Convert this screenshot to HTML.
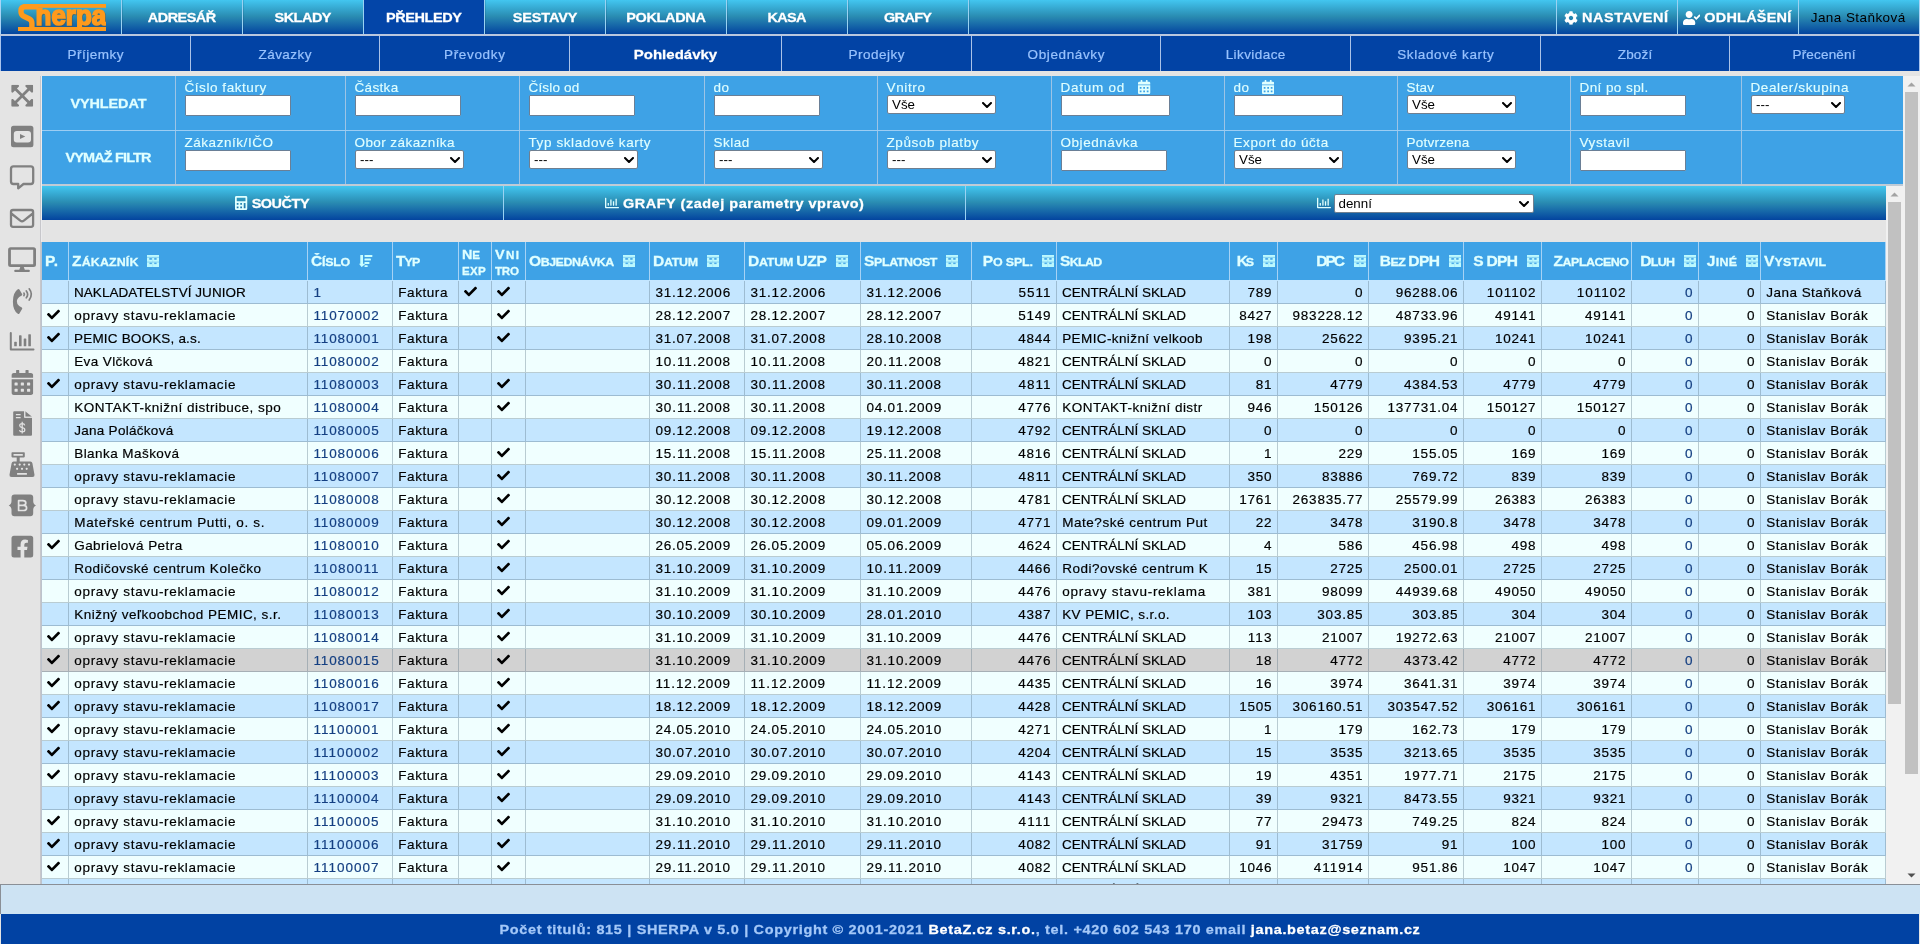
<!DOCTYPE html>
<html lang="cs"><head><meta charset="utf-8"><title>Sherpa - Pohledávky</title>
<style>
*{box-sizing:border-box}
html,body{margin:0;padding:0}
body{width:1920px;height:944px;overflow:hidden;position:relative;background:#e4e4e4;font-family:"Liberation Sans",sans-serif;font-size:13.5px;color:#000}
svg{display:block}
/* ---------- top nav ---------- */
#nav{position:absolute;left:0;top:0;width:1920px;height:34px;display:flex;background:linear-gradient(180deg,#42c6f0 0%,#2a8cb2 48%,#03449f 100%);border-left:1px solid #a9d3f6;border-right:1px solid #a9d3f6}
#gap{position:absolute;left:0;top:34px;width:1920px;height:2px;background:#bac7de}
.ni{width:121px;height:34px;border-right:1px solid #9ad2f2;box-shadow:1px 0 0 rgba(0,30,60,.13);display:flex;align-items:center;justify-content:center;color:#fff;font-weight:bold;font-size:13px;white-space:nowrap;padding-top:1px}
.ni.act{background:#0345a8}
.nr{margin-left:auto;display:flex}
.ni.r{border-right:none;border-left:1px solid #9ad2f2;box-shadow:none}
.ni .ic{fill:#fff;margin-right:4px}
.ni.usr{color:#000;font-weight:normal;font-size:13.5px}
.lg{font-family:"Liberation Sans",sans-serif;font-weight:bold;color:#ff9a1a}
/* ---------- sub nav ---------- */
#sub{position:absolute;left:0;top:36px;width:1920px;height:35px;display:flex;background:#0243a5;border-left:1px solid #a9c4ee;border-right:1px solid #a9c4ee}
.si2{height:35px;padding-top:2px;margin-right:1px;box-shadow:1px 0 0 #aac2e8;display:flex;align-items:center;justify-content:center;color:#98c2fd;font-size:13.5px;white-space:nowrap;-webkit-text-stroke:.22px currentColor}
.si2.last{box-shadow:none;margin-right:0}
.si2.act{color:#fff;font-weight:bold}
/* ---------- sidebar ---------- */
#side{position:absolute;left:0;top:76px;width:41px;height:808px}
#side:before{content:"";position:absolute;left:40px;top:0;width:2px;height:808px;background:linear-gradient(90deg,#c7c7cb 1px,transparent 1px),linear-gradient(180deg,#ebebed 166px,#bcc3cd 166px)}
#side svg{position:absolute;fill:#808080}
/* ---------- filter ---------- */
#flt{position:absolute;left:42px;top:76px;width:1861px;height:110px;background:#3ea2e6;border-bottom:2px solid #bfcbd6}
.fr{display:flex;height:55px}
.fr0{border-bottom:1px solid #9ccdf3}
.fr1{height:53px}
.fc{height:100%;margin-right:1px;box-shadow:1px 0 0 #9cc4e6;padding:4px 0 0 9px;color:#e0ffff;white-space:nowrap;position:relative}
.fc.last{box-shadow:none;margin-right:0}
.fc.btn{padding:0;display:flex;align-items:center;justify-content:center;font-weight:bold}
.lab{height:15px;line-height:15px;display:flex;align-items:center;margin-left:-.5px}
.cal{width:12.25px;height:14px;fill:#e0ffff;display:inline-block;margin-top:-2px}
.inp{height:21px;background:#fff;border:1px solid #6a7f96;border-radius:1px;margin-top:0px}
.sel{height:19px;background:#fff;border:1px solid #6f7f90;border-radius:2px;position:relative;color:#000;font-size:13.33px;line-height:17px;padding-left:4px}
.chev{position:absolute;right:3.500px;top:5.500px;width:10px;height:6px}
/* ---------- action bar ---------- */
#act{position:absolute;left:42px;top:186px;width:1844px;height:34px;display:flex;background:linear-gradient(180deg,#42c6f0 0%,#2a8cb2 48%,#03449f 100%)}
.ac{height:34px;margin-right:1px;box-shadow:1px 0 0 #9ad2f2;display:flex;align-items:center;justify-content:center;color:#fff;font-weight:bold;white-space:nowrap}
.ac.last{box-shadow:none;margin-right:0}
.ac .ic{fill:#e0ffff;margin-right:4px}
.sel.big{height:19px;margin-top:1px;margin-left:-1px;line-height:17px;font-weight:normal;margin-left:-1px;-webkit-text-stroke:0;font-size:13.33px}
/* ---------- table ---------- */
#tbl{position:absolute;left:42px;top:242px;width:1844px;height:642px;overflow:hidden}
.thr{display:flex;height:39px;background:#3ea2e6;border-bottom:1px solid #c4e6ff}
.th{height:38px;margin-right:1px;box-shadow:1px 0 0 #a6d2f5;display:flex;align-items:center;padding:0 2px 0 3px;color:#e0ffff;font-weight:bold;white-space:nowrap}
.th.r{justify-content:flex-end}
.sc{font-size:12.44px;font-weight:bold;position:relative;top:1px;display:inline-block;transform:scaleY(.9)}
.sc b{font-size:15.56px}
.two{line-height:16px;display:block}
.gi{width:12px;height:12px;margin-left:9px;flex:none;margin-top:0px}
.si{width:13.4px;height:12.1px;fill:#c8ffff;margin-left:9px;flex:none}
.tr{display:flex;height:23px;border-bottom:1px solid rgba(90,115,130,.36)}
.tr.o{background:#c4e6ff}
.tr.e{background:#f0ffff}
.tr.hov{background:#d2d2d2}
.td{height:22px;margin-right:1px;box-shadow:1px 0 0 rgba(90,115,130,.36);line-height:24px;padding:0 5px 0 5px;white-space:nowrap;overflow:hidden}
.td.r{text-align:right}
.td a{color:#143f82}
.ck{width:13px;height:13px;fill:#000;margin:4px 0 0 0}
.c-ne .ck,.c-vn .ck{margin-left:0}
/* ---------- scrollbars ---------- */
.sb{position:absolute;width:17px;background:#f1f1f1;overflow:hidden}
.sb .up,.sb .dn{position:absolute;left:0;width:17px;height:17px}
.sb .up{top:0}.sb .dn{bottom:0}
.arr{width:17px;height:17px;fill:#505050}
.dis .arr{fill:#a3a3a3}
.thumb{position:absolute;left:2px;width:13px;background:#c1c1c1}
/* ---------- footer ---------- */
#fbar{position:absolute;left:0;top:884px;width:1920px;height:30px;background:#cde3f3;border-top:1px solid #8a8f96;border-left:1px solid #8a8f96}
#foot{position:absolute;left:1px;top:914px;width:1918px;height:30px;background:#0142a3;color:#a4c8f8;font-weight:bold;font-size:13px;display:flex;align-items:center;justify-content:center;white-space:nowrap;padding-top:1px}
#foot b{color:#fff}
.lab i{display:inline-block;height:1px}
.ni.logo{justify-content:flex-start;align-items:flex-start;padding:0}
.lgo{margin:3.800px 0 0 16.600px}

#nav,#sub,#flt,#act,#tbl,#foot,#fbar,#side{will-change:transform}
.ni,.ac,.fc.btn,#foot{-webkit-text-stroke:.3px currentColor}
.ni.usr{-webkit-text-stroke:0}
.sc{-webkit-text-stroke:.3px currentColor}
.si2.act{-webkit-text-stroke:.3px currentColor}
.c-ne .sc,.c-vn .sc{font-size:11.6px}
.c-ne .sc b,.c-vn .sc b{font-size:14.4px}

.ac,.fc.btn{font-size:13px}
.ni.r{padding-right:2px}

.sel.big .chev{top:5px}

.td{-webkit-text-stroke:.18px currentColor}
.ac>span{position:relative;top:1px}
.fr0 .fc.btn{padding-top:1px}

.lab{-webkit-text-stroke:.15px currentColor}

.ac.last{padding-right:2px}
.sel.big .chev{top:5.5px}

</style></head>
<body>
<div id="nav"><div class="ni logo"><svg class="lgo" viewBox="0 0 88.400 27.400" width="88.400" height="27.400"><defs><clipPath id="lc"><rect x="0" y="3.800" width="89" height="19.300"/></clipPath></defs><g clip-path="url(#lc)" fill="#5c5140" opacity=".55"><text x="18.300" y="21.700" font-family="Liberation Sans" font-weight="bold" font-size="28.500" textLength="70.600" lengthAdjust="spacingAndGlyphs" stroke="#5c5140" stroke-width="1.700">nerpa</text></g><g fill="#ff9a1c"><rect x="5" y="0" width="83.400" height="3.800"/><rect x="0" y="23" width="88.400" height="4.400"/><path fill="none" stroke="#ff9a1c" stroke-width="5.400" stroke-linejoin="round" d="M20 2.700H7Q3 2.700 3 6.600V8Q3 11 6.200 12.500L11 14.800Q13.900 16.200 13.900 19.200V25"/><g clip-path="url(#lc)"><text x="17.600" y="21" font-family="Liberation Sans" font-weight="bold" font-size="28.500" textLength="70.600" lengthAdjust="spacingAndGlyphs" stroke="#ff9a1c" stroke-width="1.700" style="paint-order:stroke">nerpa</text><rect x="19.200" y="4" width="5.400" height="6"/></g></g></svg></div><div class="ni"><span style="display:inline-block;transform:translateY(-0.600px) scaleY(0.9);font-size:14.44px;letter-spacing:-0.52px;margin-right:0.52px">ADRESÁŘ</span></div><div class="ni"><span style="display:inline-block;transform:translateY(-0.600px) scaleY(0.9);font-size:14.44px;letter-spacing:-0.48px;margin-right:0.48px">SKLADY</span></div><div class="ni act"><span style="display:inline-block;transform:translateY(-0.600px) scaleY(0.9);font-size:14.44px;letter-spacing:-0.38px;margin-right:0.38px">PŘEHLEDY</span></div><div class="ni"><span style="display:inline-block;transform:translateY(-0.600px) scaleY(0.9);font-size:14.44px;letter-spacing:-0.09px;margin-right:0.09px">SESTAVY</span></div><div class="ni"><span style="display:inline-block;transform:translateY(-0.600px) scaleY(0.9);font-size:14.44px;letter-spacing:-0.3px;margin-right:0.3px">POKLADNA</span></div><div class="ni"><span style="display:inline-block;transform:translateY(-0.600px) scaleY(0.9);font-size:14.44px;letter-spacing:-0.66px;margin-right:0.66px">KASA</span></div><div class="ni"><span style="display:inline-block;transform:translateY(-0.600px) scaleY(0.9);font-size:14.44px;letter-spacing:-0.65px;margin-right:0.65px">GRAFY</span></div><div class="nr"><div class="ni r"><svg class="ic" viewBox="0 0 512 512" style="width:14px;height:14px"><path d="M487.4 315.7l-42.6-24.6c4.3-23.2 4.3-47 0-70.2l42.6-24.6c4.9-2.8 7.1-8.6 5.5-14-11.1-35.6-30-67.8-54.7-94.600-3.8-4.100-10-5.100-14.800-2.300L380.800 110c-17.900-15.400-38.500-27.300-60.800-35.100V25.800c0-5.600-3.900-10.500-9.400-11.700-36.700-8.200-74.300-7.800-109.200 0-5.500 1.200-9.400 6.100-9.400 11.700V75c-22.200 7.900-42.800 19.800-60.800 35.100L88.700 85.500c-4.900-2.800-11-1.900-14.800 2.300-24.700 26.700-43.600 58.900-54.700 94.600-1.700 5.400.6 11.200 5.500 14L67.300 221c-4.300 23.200-4.300 47 0 70.200l-42.600 24.600c-4.900 2.800-7.100 8.600-5.500 14 11.100 35.600 30 67.800 54.700 94.600 3.800 4.100 10 5.100 14.800 2.300l42.600-24.600c17.900 15.400 38.500 27.300 60.800 35.100v49.200c0 5.600 3.900 10.500 9.400 11.700 36.700 8.200 74.300 7.800 109.200 0 5.500-1.200 9.400-6.100 9.400-11.700v-49.200c22.200-7.900 42.800-19.800 60.800-35.100l42.600 24.600c4.900 2.800 11 1.900 14.800-2.300 24.700-26.700 43.600-58.900 54.700-94.600 1.500-5.500-.7-11.300-5.600-14.100zM256 336c-44.100 0-80-35.900-80-80s35.900-80 80-80 80 35.900 80 80-35.900 80-80 80z"/></svg><span style="display:inline-block;transform:translateY(-0.600px) scaleY(0.9);font-size:14.44px;letter-spacing:0.61px;margin-right:-0.61px">NASTAVENÍ</span></div><div class="ni r"><svg class="ic" viewBox="0 0 640 512" style="width:17.5px;height:14px"><path d="M224 256c70.700 0 128-57.300 128-128S294.700 0 224 0 96 57.300 96 128s57.300 128 128 128zm89.600 32h-16.700c-22.200 10.200-46.900 16-72.900 16s-50.600-5.800-72.900-16h-16.700C60.200 288 0 348.200 0 422.400V464c0 26.500 21.500 48 48 48h352c26.500 0 48-21.500 48-48v-41.600c0-74.200-60.200-134.400-134.400-134.400zm323-128.400l-27.800-28.100c-4.600-4.700-12.100-4.700-16.800-.1l-104.800 104-45.500-45.800c-4.600-4.700-12.100-4.700-16.800-.1l-28.100 27.900c-4.700 4.600-4.700 12.100-.1 16.800l81.700 82.300c4.600 4.700 12.100 4.700 16.800.1l141.300-140.200c4.600-4.700 4.700-12.200.1-16.800z"/></svg><span style="display:inline-block;transform:translateY(-0.600px) scaleY(0.9);font-size:14.44px;letter-spacing:0.24px;margin-right:-0.24px">ODHLÁŠENÍ</span></div><div class="ni r usr"><span style="letter-spacing:0.43px;margin-right:-0.43px">Jana Staňková</span></div></div></div>
<div id="gap"></div>
<div id="sub"><div class="si2" style="width:189px"><span style="letter-spacing:0.53px;margin-right:-0.53px">Příjemky</span></div><div class="si2" style="width:188px"><span style="letter-spacing:0.46px;margin-right:-0.46px">Závazky</span></div><div class="si2" style="width:189px"><span style="letter-spacing:0.67px;margin-right:-0.67px">Převodky</span></div><div class="si2 act" style="width:211px"><span style="display:inline-block;transform:translateY(-0.600px) scaleY(0.9);font-size:15.0px;letter-spacing:0.01px;margin-right:-0.01px">Pohledávky</span></div><div class="si2" style="width:189px"><span style="letter-spacing:0.5px;margin-right:-0.5px">Prodejky</span></div><div class="si2" style="width:188px"><span style="letter-spacing:0.63px;margin-right:-0.63px">Objednávky</span></div><div class="si2" style="width:189px"><span style="letter-spacing:0.43px;margin-right:-0.43px">Likvidace</span></div><div class="si2" style="width:189px"><span style="letter-spacing:0.63px;margin-right:-0.63px">Skladové karty</span></div><div class="si2" style="width:188px"><span style="letter-spacing:0.18px;margin-right:-0.18px">Zboží</span></div><div class="si2 last" style="width:188px"><span style="letter-spacing:0.18px;margin-right:-0.18px">Přecenění</span></div></div>
<div id="side"><svg viewBox="0 76 41 500" style="left:0;top:0;width:41px;height:500px" fill="#808080" stroke="none">
<!-- 1 expand arrows -->
<svg x="11.200" y="84.800" width="22" height="22" viewBox="0 32 448 448"><path d="M448 344v112a23.940 23.940 0 0 1-24 24H312c-21.390 0-32.090-25.900-17-41l36.200-36.200L224 295.600 116.770 402.900 153 439c15.090 15.100 4.390 41-17 41H24a23.940 23.940 0 0 1-24-24V344c0-21.400 25.890-32.100 41-17l36.190 36.200L184.460 256 77.180 148.700 41 185c-15.100 15.100-41 4.400-41-17V56a23.940 23.940 0 0 1 24-24h112c21.390 0 32.090 25.900 17 41l-36.200 36.200L224 216.400l107.230-107.300L295 73c-15.090-15.100-4.390-41 17-41h112a23.940 23.940 0 0 1 24 24v112c0 21.400-25.890 32.100-41 17l-36.190-36.200L263.540 256l107.280 107.300L407 327.100c15.100-15.200 41-4.500 41 16.900z"/></svg>
<!-- 2 youtube square -->
<path fill-rule="evenodd" d="M13.500 125.800h17.400a2.500 2.500 0 0 1 2.500 2.500v16.400a2.500 2.500 0 0 1-2.500 2.500H13.500a2.500 2.500 0 0 1-2.500-2.500v-16.400a2.500 2.500 0 0 1 2.500-2.500zM16.800 131q-3 0-3 3v5.400q0 3 3 3h11.200q3 0 3-3V134q0-3-3-3zM20 133.900v5.200l5.300-2.600z"/>
<!-- 3 comment-alt regular -->
<path fill="none" stroke="#808080" stroke-width="2.300" stroke-linejoin="round" d="M13.500 166.400h17.200a2.500 2.500 0 0 1 2.500 2.500v12.600a2.500 2.500 0 0 1-2.500 2.500h-7.200l-5.300 4.300v-4.300h-4.700a2.500 2.500 0 0 1-2.500-2.500v-12.600a2.500 2.500 0 0 1 2.500-2.500z"/>
<!-- 4 envelope regular -->
<path fill="none" stroke="#808080" stroke-width="2.300" stroke-linejoin="round" d="M13 210h18.100a2 2 0 0 1 2 2v12.800a2 2 0 0 1-2 2H13a2 2 0 0 1-2-2V212a2 2 0 0 1 2-2zM11.300 213.500l9 7.200q1.750 1.300 3.500 0l9-7.200"/>
<!-- 5 desktop -->
<path fill-rule="evenodd" d="M10.600 247.200h22.900a2.500 2.500 0 0 1 2.500 2.500v14.900a2.500 2.500 0 0 1-2.500 2.500H10.600a2.500 2.500 0 0 1-2.500-2.500v-14.900a2.500 2.500 0 0 1 2.500-2.500zM10.900 249.800v14.400h22.300v-14.400zM20.300 267.100h3.500l1 2.700h4a1.100 1.100 0 0 1 0 2.200H15.300a1.100 1.100 0 0 1 0-2.200h4z"/>
<!-- 6 phone volume -->
<path d="M19.4 289.6l2.7 4.4q.5.9-.3 1.500l-2.600 1.600q-5 4.400 0 8.800l2.600 1.600q.8.600.3 1.500l-2.700 4.400q-.6.9-1.600.4q-4.900-3.400-4.900-12.300q0-8.900 4.900-12.300q1-.5 1.600.4z"/>
<path fill="none" stroke="#808080" stroke-width="1.700" stroke-linecap="round" d="M23.900 293.100q1 1.300 0 2.600M26.300 291q2.700 3.400 0 6.800M29.200 288.800q4.300 5.600 0 11.200"/>
<!-- 7 chart-bar regular -->
<path d="M10.800 332a1 1 0 0 1 1 1v15.600h21.700a1 1 0 0 1 0 2H10.800a1 1 0 0 1-1-1V333a1 1 0 0 1 1-1z"/>
<rect x="14.200" y="341.800" width="2.600" height="4.500" rx=".6"/><rect x="19" y="335.300" width="2.600" height="11" rx=".6"/><rect x="23.700" y="338.400" width="2.600" height="7.900" rx=".6"/><rect x="28.300" y="334.200" width="2.600" height="12.100" rx=".6"/>
<!-- 8 calendar-alt -->
<svg x="11.400" y="369.900" width="21.900" height="25" viewBox="0 0 448 512"><path d="M0 464c0 26.500 21.500 48 48 48h352c26.500 0 48-21.500 48-48V192H0v272zm320-196c0-6.600 5.400-12 12-12h40c6.600 0 12 5.400 12 12v40c0 6.600-5.400 12-12 12h-40c-6.600 0-12-5.400-12-12v-40zm0 128c0-6.600 5.400-12 12-12h40c6.600 0 12 5.400 12 12v40c0 6.600-5.400 12-12 12h-40c-6.600 0-12-5.400-12-12v-40zM192 268c0-6.600 5.400-12 12-12h40c6.600 0 12 5.400 12 12v40c0 6.600-5.400 12-12 12h-40c-6.600 0-12-5.400-12-12v-40zm0 128c0-6.600 5.400-12 12-12h40c6.600 0 12 5.400 12 12v40c0 6.600-5.400 12-12 12h-40c-6.600 0-12-5.400-12-12v-40zM64 268c0-6.600 5.400-12 12-12h40c6.600 0 12 5.400 12 12v40c0 6.600-5.400 12-12 12H76c-6.600 0-12-5.400-12-12v-40zm0 128c0-6.600 5.400-12 12-12h40c6.600 0 12 5.400 12 12v40c0 6.600-5.400 12-12 12H76c-6.600 0-12-5.400-12-12v-40zM400 64h-48V16c0-8.800-7.200-16-16-16h-32c-8.800 0-16 7.200-16 16v48H160V16c0-8.800-7.200-16-16-16h-32c-8.800 0-16 7.200-16 16v48H48C21.500 64 0 85.500 0 112v48h448v-48c0-26.500-21.500-48-48-48z"/></svg>
<!-- 9 file-invoice-dollar -->
<path fill-rule="evenodd" d="M14.200 411.200h10v6.500h7.800v17.100a1 1 0 0 1-1 1H14.200a1 1 0 0 1-1-1v-22.600a1 1 0 0 1 1-1zM15.900 413.900v1.400h4.700v-1.400zM15.900 416.900v1.400h4.700v-1.400z"/>
<path d="M25.300 411.200l6.700 5.500h-6.700z"/>
<path fill="none" stroke="#e4e4e4" stroke-width="1.200" d="M22.200 421.800v11.800M24.700 425.300q-.3-1.600-2.500-1.600q-2.500 0-2.500 1.900q0 1.600 2.500 2.100q2.600.5 2.600 2.200q0 1.900-2.600 1.900q-2.400 0-2.700-1.700"/>
<path fill="none" stroke="#e4e4e4" stroke-width=".9" d="M24.700 411.200v6h7.300"/>
<!-- 10 cash register -->
<path fill-rule="evenodd" d="M12.300 452.300h11.700a.8.800 0 0 1 .8.800v3.500a.8.800 0 0 1-.8.800h-4.300v4.200h10.700q1.600 0 2 1.600l2.100 11.500q.3 2.200-2 2.200H11.500q-2.300 0-2-2.200l2.100-11.500q.4-1.600 2-1.600h3.100v-4.200h-4.400a.8.800 0 0 1-.8-.8v-3.500a.8.800 0 0 1 .8-.8zM13.500 454v1.700h9.300V454zM17.100 473v1.800h9.800V473z"/>
<g fill="#e4e4e4"><circle cx="14.800" cy="464.600" r="1.100"/><circle cx="19.700" cy="464.600" r="1.100"/><circle cx="24.300" cy="464.600" r="1.100"/><circle cx="29" cy="464.600" r="1.100"/><circle cx="17.100" cy="468.800" r="1.100"/><circle cx="22" cy="468.800" r="1.100"/><circle cx="26.700" cy="468.800" r="1.100"/></g>
<!-- 11 bootstrap -->
<path d="M14.500 494.500h15.700q3 0 3 3v3.500q0 3.300 2.800 4.400q-2.800 1.100-2.800 4.400v3.500q0 3-3 3H14.500q-3 0-3-3v-3.500q0-3.300-2.800-4.400q2.800-1.100 2.800-4.400v-3.500q0-3 3-3z"/>
<path fill="none" stroke="#e4e4e4" stroke-width="1.700" stroke-linejoin="round" d="M18.600 500.700h4.300q2.900 0 2.900 2.400q0 2.300-2.900 2.300h-4.300zM18.600 505.400h4.900q3.100 0 3.100 2.600q0 2.500-3.100 2.500h-4.900zM18.600 500.700v9.800"/>
<!-- 12 facebook square -->
<path fill-rule="evenodd" d="M14 535.800h16.700a2.500 2.500 0 0 1 2.500 2.500v16.800a2.500 2.500 0 0 1-2.500 2.500h-6.400v-7.500h2.700l.5-3.300h-3.200v-2.100q0-2 2.100-2h1.500v-2.800q-1.500-.3-2.800-.3q-4.500 0-4.500 4.700v2.500h-3.100v3.300h3.100v7.500H14a2.500 2.500 0 0 1-2.500-2.500v-16.800a2.500 2.500 0 0 1 2.500-2.500z"/>
</svg>
</div>
<div id="flt"><div class="fr fr0"><div class="fc btn" style="width:133px"><span style="display:inline-block;transform:translateY(-0.600px) scaleY(0.9);font-size:14.44px;letter-spacing:-0.11px;margin-right:0.11px">VYHLEDAT</span></div><div class="fc" style="width:169px"><div class="lab"><span style="letter-spacing:0.56px;margin-right:-0.56px">Číslo faktury</span></div><div class="inp" style="width:106px"></div></div><div class="fc" style="width:173px"><div class="lab"><span style="letter-spacing:0.34px;margin-right:-0.34px">Částka</span></div><div class="inp" style="width:106px"></div></div><div class="fc" style="width:184px"><div class="lab"><span style="letter-spacing:0.17px;margin-right:-0.17px">Číslo od</span></div><div class="inp" style="width:106px"></div></div><div class="fc" style="width:172px"><div class="lab"><span style="letter-spacing:0.47px;margin-right:-0.47px">do</span></div><div class="inp" style="width:106px"></div></div><div class="fc" style="width:173px"><div class="lab"><span style="letter-spacing:0.64px;margin-right:-0.64px">Vnitro</span></div><div class="sel" style="width:109px"><span>Vše</span><svg class="chev" viewBox="0 0 10 6"><path d="M1 1l4 4 4-4" fill="none" stroke="#000" stroke-width="2" stroke-linecap="round" stroke-linejoin="round"/></svg></div></div><div class="fc" style="width:172px"><div class="lab"><span style="letter-spacing:0.75px;margin-right:-0.75px">Datum od</span><i style="width:14px"></i><svg class="cal" viewBox="0 0 448 512"><path d="M0 464c0 26.500 21.500 48 48 48h352c26.500 0 48-21.500 48-48V192H0v272zm320-196c0-6.600 5.400-12 12-12h40c6.600 0 12 5.400 12 12v40c0 6.600-5.400 12-12 12h-40c-6.600 0-12-5.400-12-12v-40zm0 128c0-6.600 5.400-12 12-12h40c6.600 0 12 5.400 12 12v40c0 6.600-5.400 12-12 12h-40c-6.600 0-12-5.400-12-12v-40zM192 268c0-6.600 5.400-12 12-12h40c6.600 0 12 5.400 12 12v40c0 6.600-5.400 12-12 12h-40c-6.600 0-12-5.400-12-12v-40zm0 128c0-6.600 5.400-12 12-12h40c6.600 0 12 5.400 12 12v40c0 6.600-5.400 12-12 12h-40c-6.600 0-12-5.400-12-12v-40zM64 268c0-6.600 5.400-12 12-12h40c6.600 0 12 5.400 12 12v40c0 6.600-5.400 12-12 12H76c-6.600 0-12-5.400-12-12v-40zm0 128c0-6.600 5.400-12 12-12h40c6.600 0 12 5.400 12 12v40c0 6.600-5.400 12-12 12H76c-6.600 0-12-5.400-12-12v-40zM400 64h-48V16c0-8.800-7.200-16-16-16h-32c-8.800 0-16 7.200-16 16v48H160V16c0-8.800-7.200-16-16-16h-32c-8.800 0-16 7.200-16 16v48H48C21.500 64 0 85.500 0 112v48h448v-48c0-26.500-21.500-48-48-48z"/></svg></div><div class="inp" style="width:109px"></div></div><div class="fc" style="width:172px"><div class="lab"><span style="letter-spacing:0.47px;margin-right:-0.47px">do</span><i style="width:13px"></i><svg class="cal" viewBox="0 0 448 512"><path d="M0 464c0 26.500 21.500 48 48 48h352c26.500 0 48-21.500 48-48V192H0v272zm320-196c0-6.600 5.400-12 12-12h40c6.600 0 12 5.400 12 12v40c0 6.600-5.400 12-12 12h-40c-6.600 0-12-5.400-12-12v-40zm0 128c0-6.600 5.400-12 12-12h40c6.600 0 12 5.400 12 12v40c0 6.600-5.400 12-12 12h-40c-6.600 0-12-5.400-12-12v-40zM192 268c0-6.600 5.400-12 12-12h40c6.600 0 12 5.400 12 12v40c0 6.600-5.400 12-12 12h-40c-6.600 0-12-5.400-12-12v-40zm0 128c0-6.600 5.400-12 12-12h40c6.600 0 12 5.400 12 12v40c0 6.600-5.400 12-12 12h-40c-6.600 0-12-5.400-12-12v-40zM64 268c0-6.600 5.400-12 12-12h40c6.600 0 12 5.400 12 12v40c0 6.600-5.400 12-12 12H76c-6.600 0-12-5.400-12-12v-40zm0 128c0-6.600 5.400-12 12-12h40c6.600 0 12 5.400 12 12v40c0 6.600-5.400 12-12 12H76c-6.600 0-12-5.400-12-12v-40zM400 64h-48V16c0-8.800-7.200-16-16-16h-32c-8.800 0-16 7.200-16 16v48H160V16c0-8.800-7.200-16-16-16h-32c-8.800 0-16 7.200-16 16v48H48C21.500 64 0 85.500 0 112v48h448v-48c0-26.500-21.500-48-48-48z"/></svg></div><div class="inp" style="width:109px"></div></div><div class="fc" style="width:172px"><div class="lab"><span style="letter-spacing:0.16px;margin-right:-0.16px">Stav</span></div><div class="sel" style="width:109px"><span>Vše</span><svg class="chev" viewBox="0 0 10 6"><path d="M1 1l4 4 4-4" fill="none" stroke="#000" stroke-width="2" stroke-linecap="round" stroke-linejoin="round"/></svg></div></div><div class="fc" style="width:170px"><div class="lab"><span style="letter-spacing:0.42px;margin-right:-0.42px">Dní po spl.</span></div><div class="inp" style="width:106px"></div></div><div class="fc last" style="width:160px"><div class="lab"><span style="letter-spacing:0.61px;margin-right:-0.61px">Dealer/skupina</span></div><div class="sel" style="width:94px"><span>---</span><svg class="chev" viewBox="0 0 10 6"><path d="M1 1l4 4 4-4" fill="none" stroke="#000" stroke-width="2" stroke-linecap="round" stroke-linejoin="round"/></svg></div></div></div><div class="fr fr1"><div class="fc btn" style="width:133px"><span style="display:inline-block;transform:translateY(-0.600px) scaleY(0.9);font-size:14.44px;letter-spacing:-0.84px;margin-right:0.84px">VYMAŽ FILTR</span></div><div class="fc" style="width:169px"><div class="lab"><span style="letter-spacing:0.54px;margin-right:-0.54px">Zákazník/IČO</span></div><div class="inp" style="width:106px"></div></div><div class="fc" style="width:173px"><div class="lab"><span style="letter-spacing:0.42px;margin-right:-0.42px">Obor zákazníka</span></div><div class="sel" style="width:109px"><span>---</span><svg class="chev" viewBox="0 0 10 6"><path d="M1 1l4 4 4-4" fill="none" stroke="#000" stroke-width="2" stroke-linecap="round" stroke-linejoin="round"/></svg></div></div><div class="fc" style="width:184px"><div class="lab"><span style="letter-spacing:0.6px;margin-right:-0.6px">Typ skladové karty</span></div><div class="sel" style="width:109px"><span>---</span><svg class="chev" viewBox="0 0 10 6"><path d="M1 1l4 4 4-4" fill="none" stroke="#000" stroke-width="2" stroke-linecap="round" stroke-linejoin="round"/></svg></div></div><div class="fc" style="width:172px"><div class="lab"><span style="letter-spacing:0.49px;margin-right:-0.49px">Sklad</span></div><div class="sel" style="width:109px"><span>---</span><svg class="chev" viewBox="0 0 10 6"><path d="M1 1l4 4 4-4" fill="none" stroke="#000" stroke-width="2" stroke-linecap="round" stroke-linejoin="round"/></svg></div></div><div class="fc" style="width:173px"><div class="lab"><span style="letter-spacing:0.6px;margin-right:-0.6px">Způsob platby</span></div><div class="sel" style="width:109px"><span>---</span><svg class="chev" viewBox="0 0 10 6"><path d="M1 1l4 4 4-4" fill="none" stroke="#000" stroke-width="2" stroke-linecap="round" stroke-linejoin="round"/></svg></div></div><div class="fc" style="width:172px"><div class="lab"><span style="letter-spacing:0.55px;margin-right:-0.55px">Objednávka</span></div><div class="inp" style="width:106px"></div></div><div class="fc" style="width:172px"><div class="lab"><span style="letter-spacing:0.59px;margin-right:-0.59px">Export do účta</span></div><div class="sel" style="width:109px"><span>Vše</span><svg class="chev" viewBox="0 0 10 6"><path d="M1 1l4 4 4-4" fill="none" stroke="#000" stroke-width="2" stroke-linecap="round" stroke-linejoin="round"/></svg></div></div><div class="fc" style="width:172px"><div class="lab"><span style="letter-spacing:0.24px;margin-right:-0.24px">Potvrzena</span></div><div class="sel" style="width:109px"><span>Vše</span><svg class="chev" viewBox="0 0 10 6"><path d="M1 1l4 4 4-4" fill="none" stroke="#000" stroke-width="2" stroke-linecap="round" stroke-linejoin="round"/></svg></div></div><div class="fc" style="width:170px"><div class="lab"><span style="letter-spacing:0.57px;margin-right:-0.57px">Vystavil</span></div><div class="inp" style="width:106px"></div></div><div class="fc last" style="width:160px"><div class="lab"></div></div></div></div>
<div id="act"><div class="ac" style="width:461px"><svg class="ic" viewBox="0 0 448 512" style="width:12.25px;height:14px"><path d="M400 0H48C22.400 0 0 22.400 0 48v416c0 25.600 22.400 48 48 48h352c25.600 0 48-22.400 48-48V48c0-25.600-22.400-48-48-48zM128 435.200c0 6.400-6.400 12.800-12.800 12.800H76.800c-6.400 0-12.800-6.400-12.800-12.800v-38.400c0-6.400 6.400-12.800 12.800-12.800h38.400c6.400 0 12.800 6.400 12.800 12.800v38.400zm0-128c0 6.400-6.400 12.800-12.800 12.800H76.800c-6.400 0-12.800-6.400-12.800-12.800v-38.400c0-6.400 6.400-12.800 12.800-12.800h38.400c6.400 0 12.800 6.400 12.800 12.800v38.400zm128 128c0 6.400-6.400 12.800-12.800 12.800h-38.400c-6.400 0-12.800-6.400-12.800-12.800v-38.400c0-6.400 6.400-12.800 12.800-12.800h38.400c6.400 0 12.800 6.400 12.800 12.800v38.400zm0-128c0 6.400-6.400 12.800-12.800 12.800h-38.400c-6.400 0-12.800-6.400-12.800-12.800v-38.400c0-6.400 6.400-12.800 12.800-12.800h38.400c6.400 0 12.800 6.400 12.800 12.800v38.400zm128 128c0 6.400-6.400 12.800-12.800 12.800h-38.400c-6.400 0-12.800-6.400-12.800-12.800V268.800c0-6.400 6.400-12.800 12.800-12.800h38.400c6.400 0 12.800 6.400 12.800 12.800v166.400zm0-256c0 6.400-6.400 12.800-12.800 12.800H76.800c-6.400 0-12.800-6.400-12.800-12.800V76.800C64 70.400 70.400 64 76.800 64h294.400c6.400 0 12.800 6.400 12.800 12.800v102.400z"/></svg><span style="display:inline-block;transform:translateY(-0.600px) scaleY(0.9);font-size:14.44px;letter-spacing:-0.44px;margin-right:0.44px">SOUČTY</span></div><div class="ac" style="width:461px"><svg class="ic" viewBox="0 0 512 512" style="width:14px;height:14px"><path d="M396.800 352h22.400c6.400 0 12.800-6.400 12.800-12.800V108.800c0-6.400-6.400-12.800-12.800-12.800h-22.400c-6.400 0-12.800 6.400-12.800 12.800v230.400c0 6.400 6.400 12.800 12.800 12.800zm-192 0h22.400c6.400 0 12.800-6.400 12.800-12.800V140.800c0-6.400-6.400-12.800-12.800-12.800h-22.400c-6.400 0-12.800 6.400-12.800 12.800v198.400c0 6.400 6.400 12.800 12.800 12.800zm96 0h22.400c6.400 0 12.800-6.400 12.800-12.800V204.800c0-6.400-6.400-12.800-12.800-12.800h-22.400c-6.400 0-12.800 6.400-12.800 12.800v134.400c0 6.400 6.400 12.800 12.800 12.800zM496 400H48V80c0-8.840-7.160-16-16-16H16C7.160 64 0 71.160 0 80v336c0 17.670 14.330 32 32 32h464c8.840 0 16-7.160 16-16v-16c0-8.840-7.160-16-16-16zm-387.200-48h22.400c6.400 0 12.800-6.400 12.800-12.800v-70.400c0-6.400-6.400-12.800-12.800-12.800h-22.400c-6.400 0-12.800 6.400-12.800 12.800v70.400c0 6.400 6.400 12.800 12.800 12.800z"/></svg><span style="display:inline-block;transform:translateY(-0.600px) scaleY(0.9);font-size:14.44px;letter-spacing:0.54px;margin-right:-0.54px">GRAFY (zadej parametry vpravo)</span></div><div class="ac last" style="width:920px"><svg class="ic" viewBox="0 0 512 512" style="width:14px;height:14px"><path d="M396.800 352h22.400c6.400 0 12.800-6.400 12.800-12.800V108.800c0-6.400-6.400-12.800-12.800-12.800h-22.400c-6.400 0-12.800 6.400-12.800 12.800v230.400c0 6.400 6.400 12.800 12.800 12.800zm-192 0h22.400c6.400 0 12.800-6.400 12.800-12.800V140.800c0-6.400-6.400-12.800-12.800-12.800h-22.400c-6.400 0-12.800 6.400-12.800 12.800v198.400c0 6.400 6.400 12.800 12.800 12.800zm96 0h22.400c6.400 0 12.800-6.400 12.800-12.800V204.800c0-6.400-6.400-12.800-12.800-12.800h-22.400c-6.400 0-12.800 6.400-12.800 12.800v134.400c0 6.400 6.400 12.800 12.800 12.800zM496 400H48V80c0-8.840-7.160-16-16-16H16C7.160 64 0 71.160 0 80v336c0 17.670 14.330 32 32 32h464c8.840 0 16-7.160 16-16v-16c0-8.840-7.160-16-16-16zm-387.200-48h22.400c6.400 0 12.800-6.400 12.800-12.800v-70.400c0-6.400-6.400-12.800-12.800-12.800h-22.400c-6.400 0-12.800 6.400-12.800 12.800v70.400c0 6.400 6.400 12.800 12.800 12.800z"/></svg><div class="sel big" style="width:200px"><span>denní</span><svg class="chev" viewBox="0 0 10 6"><path d="M1 1l4 4 4-4" fill="none" stroke="#000" stroke-width="2" stroke-linecap="round" stroke-linejoin="round"/></svg></div></div></div>
<div id="tbl">
<div class="thr">
<div class="th l c-p" style="width:26px"><span class="sc" style="letter-spacing:0.51px;margin-right:-0.51px"><b>P.</b></span></div>
<div class="th l c-zak" style="width:238px"><span class="sc" style="letter-spacing:0.14px;margin-right:-0.14px"><b>Z</b>ÁKAZNÍK</span><svg class="gi" viewBox="0 0 12 12"><rect x="0" y="0" width="12" height="12" fill="#c6ffff" opacity=".93"/><rect x="2.3" y="2.9" width="2.6" height="1.9" fill="#3ea2e6" opacity="0.9"/><rect x="7.2" y="2.9" width="2.4" height="1.9" fill="#3ea2e6" opacity="0.9"/><rect x="2.5" y="7.6" width="2.4" height="1.5" fill="#3ea2e6" opacity="0.9"/><rect x="7.2" y="7.6" width="2.4" height="1.5" fill="#3ea2e6" opacity="0.9"/><rect x="0" y="1.9" width="12" height="0.9" fill="#3ea2e6" opacity="0.45"/><rect x="0" y="6.6" width="12" height="0.9" fill="#3ea2e6" opacity="0.45"/><rect x="5.2" y="2" width="0.9" height="10" fill="#3ea2e6" opacity="0.15"/></svg></div>
<div class="th l c-cis" style="width:84px"><span class="sc" style="letter-spacing:-0.27px;margin-right:0.27px"><b>Č</b>ÍSLO</span><svg class="si" viewBox="0 0 13.400 12.100"><path d="M1.300 0h2.700v8.700h2.600L2.650 12.100 0 8.700h1.300z"/><rect x="5.500" y="0" width="7.900" height="2" rx=".5"/><rect x="5.500" y="3.500" width="6.400" height="2" rx=".5"/><rect x="5.500" y="7.100" width="4.900" height="1.900" rx=".5"/><rect x="5.500" y="10.200" width="3.200" height="1.900" rx=".5"/></svg></div>
<div class="th l c-typ" style="width:65px"><span class="sc" style="letter-spacing:-0.95px;margin-right:0.95px"><b>T</b>YP</span></div>
<div class="th l c-ne" style="width:32px"><span class="two"><span class="sc" style="letter-spacing:-0.19px;margin-right:0.19px"><b>N</b>E</span><br><span class="sc" style="letter-spacing:0.25px;margin-right:-0.25px">EXP</span></span></div>
<div class="th l c-vn" style="width:33px"><span class="two"><span class="sc" style="letter-spacing:1.37px;margin-right:-1.37px"><b>V</b>NI</span><br><span class="sc" style="letter-spacing:-0.27px;margin-right:0.27px">TRO</span></span></div>
<div class="th l c-obj" style="width:123px"><span class="sc" style="letter-spacing:-0.48px;margin-right:0.48px"><b>O</b>BJEDNÁVKA</span><svg class="gi" viewBox="0 0 12 12"><rect x="0" y="0" width="12" height="12" fill="#c6ffff" opacity=".93"/><rect x="2.3" y="2.9" width="2.6" height="1.9" fill="#3ea2e6" opacity="0.9"/><rect x="7.2" y="2.9" width="2.4" height="1.9" fill="#3ea2e6" opacity="0.9"/><rect x="2.5" y="7.6" width="2.4" height="1.5" fill="#3ea2e6" opacity="0.9"/><rect x="7.2" y="7.6" width="2.4" height="1.5" fill="#3ea2e6" opacity="0.9"/><rect x="0" y="1.9" width="12" height="0.9" fill="#3ea2e6" opacity="0.45"/><rect x="0" y="6.6" width="12" height="0.9" fill="#3ea2e6" opacity="0.45"/><rect x="5.2" y="2" width="0.9" height="10" fill="#3ea2e6" opacity="0.15"/></svg></div>
<div class="th l c-dat" style="width:94px"><span class="sc" style="letter-spacing:-0.26px;margin-right:0.26px"><b>D</b>ATUM</span><svg class="gi" viewBox="0 0 12 12"><rect x="0" y="0" width="12" height="12" fill="#c6ffff" opacity=".93"/><rect x="2.3" y="2.9" width="2.6" height="1.9" fill="#3ea2e6" opacity="0.9"/><rect x="7.2" y="2.9" width="2.4" height="1.9" fill="#3ea2e6" opacity="0.9"/><rect x="2.5" y="7.6" width="2.4" height="1.5" fill="#3ea2e6" opacity="0.9"/><rect x="7.2" y="7.6" width="2.4" height="1.5" fill="#3ea2e6" opacity="0.9"/><rect x="0" y="1.9" width="12" height="0.9" fill="#3ea2e6" opacity="0.45"/><rect x="0" y="6.6" width="12" height="0.9" fill="#3ea2e6" opacity="0.45"/><rect x="5.2" y="2" width="0.9" height="10" fill="#3ea2e6" opacity="0.15"/></svg></div>
<div class="th l c-uzp" style="width:115px"><span class="sc" style="letter-spacing:-0.23px;margin-right:0.23px"><b>D</b>ATUM <b>UZP</b></span><svg class="gi" viewBox="0 0 12 12"><rect x="0" y="0" width="12" height="12" fill="#c6ffff" opacity=".93"/><rect x="2.3" y="2.9" width="2.6" height="1.9" fill="#3ea2e6" opacity="0.9"/><rect x="7.2" y="2.9" width="2.4" height="1.9" fill="#3ea2e6" opacity="0.9"/><rect x="2.5" y="7.6" width="2.4" height="1.5" fill="#3ea2e6" opacity="0.9"/><rect x="7.2" y="7.6" width="2.4" height="1.5" fill="#3ea2e6" opacity="0.9"/><rect x="0" y="1.9" width="12" height="0.9" fill="#3ea2e6" opacity="0.45"/><rect x="0" y="6.6" width="12" height="0.9" fill="#3ea2e6" opacity="0.45"/><rect x="5.2" y="2" width="0.9" height="10" fill="#3ea2e6" opacity="0.15"/></svg></div>
<div class="th l c-spl" style="width:110px"><span class="sc" style="letter-spacing:-0.38px;margin-right:0.38px"><b>S</b>PLATNOST</span><svg class="gi" viewBox="0 0 12 12"><rect x="0" y="0" width="12" height="12" fill="#c6ffff" opacity=".93"/><rect x="2.3" y="2.9" width="2.6" height="1.9" fill="#3ea2e6" opacity="0.9"/><rect x="7.2" y="2.9" width="2.4" height="1.9" fill="#3ea2e6" opacity="0.9"/><rect x="2.5" y="7.6" width="2.4" height="1.5" fill="#3ea2e6" opacity="0.9"/><rect x="7.2" y="7.6" width="2.4" height="1.5" fill="#3ea2e6" opacity="0.9"/><rect x="0" y="1.9" width="12" height="0.9" fill="#3ea2e6" opacity="0.45"/><rect x="0" y="6.6" width="12" height="0.9" fill="#3ea2e6" opacity="0.45"/><rect x="5.2" y="2" width="0.9" height="10" fill="#3ea2e6" opacity="0.15"/></svg></div>
<div class="th r c-po" style="width:84px"><span class="sc" style="letter-spacing:-0.16px;margin-right:0.16px"><b>P</b>O SPL.</span><svg class="gi" viewBox="0 0 12 12"><rect x="0" y="0" width="12" height="12" fill="#c6ffff" opacity=".93"/><rect x="2.3" y="2.9" width="2.6" height="1.9" fill="#3ea2e6" opacity="0.9"/><rect x="7.2" y="2.9" width="2.4" height="1.9" fill="#3ea2e6" opacity="0.9"/><rect x="2.5" y="7.6" width="2.4" height="1.5" fill="#3ea2e6" opacity="0.9"/><rect x="7.2" y="7.6" width="2.4" height="1.5" fill="#3ea2e6" opacity="0.9"/><rect x="0" y="1.9" width="12" height="0.9" fill="#3ea2e6" opacity="0.45"/><rect x="0" y="6.6" width="12" height="0.9" fill="#3ea2e6" opacity="0.45"/><rect x="5.2" y="2" width="0.9" height="10" fill="#3ea2e6" opacity="0.15"/></svg></div>
<div class="th l c-skl" style="width:172px"><span class="sc" style="letter-spacing:-0.68px;margin-right:0.68px"><b>S</b>KLAD</span></div>
<div class="th r c-ks" style="width:47px"><span class="sc" style="letter-spacing:-2.33px;margin-right:2.33px"><b>K</b>S</span><svg class="gi" viewBox="0 0 12 12"><rect x="0" y="0" width="12" height="12" fill="#c6ffff" opacity=".93"/><rect x="2.3" y="2.9" width="2.6" height="1.9" fill="#3ea2e6" opacity="0.9"/><rect x="7.2" y="2.9" width="2.4" height="1.9" fill="#3ea2e6" opacity="0.9"/><rect x="2.5" y="7.6" width="2.4" height="1.5" fill="#3ea2e6" opacity="0.9"/><rect x="7.2" y="7.6" width="2.4" height="1.5" fill="#3ea2e6" opacity="0.9"/><rect x="0" y="1.9" width="12" height="0.9" fill="#3ea2e6" opacity="0.45"/><rect x="0" y="6.6" width="12" height="0.9" fill="#3ea2e6" opacity="0.45"/><rect x="5.2" y="2" width="0.9" height="10" fill="#3ea2e6" opacity="0.15"/></svg></div>
<div class="th r c-dpc" style="width:90px"><span class="sc" style="letter-spacing:-2.06px;margin-right:2.06px"><b>DPC</b></span><svg class="gi" viewBox="0 0 12 12"><rect x="0" y="0" width="12" height="12" fill="#c6ffff" opacity=".93"/><rect x="2.3" y="2.9" width="2.6" height="1.9" fill="#3ea2e6" opacity="0.9"/><rect x="7.2" y="2.9" width="2.4" height="1.9" fill="#3ea2e6" opacity="0.9"/><rect x="2.5" y="7.6" width="2.4" height="1.5" fill="#3ea2e6" opacity="0.9"/><rect x="7.2" y="7.6" width="2.4" height="1.5" fill="#3ea2e6" opacity="0.9"/><rect x="0" y="1.9" width="12" height="0.9" fill="#3ea2e6" opacity="0.45"/><rect x="0" y="6.6" width="12" height="0.9" fill="#3ea2e6" opacity="0.45"/><rect x="5.2" y="2" width="0.9" height="10" fill="#3ea2e6" opacity="0.15"/></svg></div>
<div class="th r c-bez" style="width:94px"><span class="sc" style="letter-spacing:-0.54px;margin-right:0.54px"><b>B</b>EZ <b>DPH</b></span><svg class="gi" viewBox="0 0 12 12"><rect x="0" y="0" width="12" height="12" fill="#c6ffff" opacity=".93"/><rect x="2.3" y="2.9" width="2.6" height="1.9" fill="#3ea2e6" opacity="0.9"/><rect x="7.2" y="2.9" width="2.4" height="1.9" fill="#3ea2e6" opacity="0.9"/><rect x="2.5" y="7.6" width="2.4" height="1.5" fill="#3ea2e6" opacity="0.9"/><rect x="7.2" y="7.6" width="2.4" height="1.5" fill="#3ea2e6" opacity="0.9"/><rect x="0" y="1.9" width="12" height="0.9" fill="#3ea2e6" opacity="0.45"/><rect x="0" y="6.6" width="12" height="0.9" fill="#3ea2e6" opacity="0.45"/><rect x="5.2" y="2" width="0.9" height="10" fill="#3ea2e6" opacity="0.15"/></svg></div>
<div class="th r c-sd" style="width:77px"><span class="sc" style="letter-spacing:-0.7px;margin-right:0.7px"><b>S DPH</b></span><svg class="gi" viewBox="0 0 12 12"><rect x="0" y="0" width="12" height="12" fill="#c6ffff" opacity=".93"/><rect x="2.3" y="2.9" width="2.6" height="1.9" fill="#3ea2e6" opacity="0.9"/><rect x="7.2" y="2.9" width="2.4" height="1.9" fill="#3ea2e6" opacity="0.9"/><rect x="2.5" y="7.6" width="2.4" height="1.5" fill="#3ea2e6" opacity="0.9"/><rect x="7.2" y="7.6" width="2.4" height="1.5" fill="#3ea2e6" opacity="0.9"/><rect x="0" y="1.9" width="12" height="0.9" fill="#3ea2e6" opacity="0.45"/><rect x="0" y="6.6" width="12" height="0.9" fill="#3ea2e6" opacity="0.45"/><rect x="5.2" y="2" width="0.9" height="10" fill="#3ea2e6" opacity="0.15"/></svg></div>
<div class="th r c-zap" style="width:89px"><span class="sc" style="letter-spacing:-0.48px;margin-right:0.48px"><b>Z</b>APLACENO</span></div>
<div class="th r c-dl" style="width:66px"><span class="sc" style="letter-spacing:-0.7px;margin-right:0.7px"><b>D</b>LUH</span><svg class="gi" viewBox="0 0 12 12"><rect x="0" y="0" width="12" height="12" fill="#c6ffff" opacity=".93"/><rect x="2.3" y="2.9" width="2.6" height="1.9" fill="#3ea2e6" opacity="0.9"/><rect x="7.2" y="2.9" width="2.4" height="1.9" fill="#3ea2e6" opacity="0.9"/><rect x="2.5" y="7.6" width="2.4" height="1.5" fill="#3ea2e6" opacity="0.9"/><rect x="7.2" y="7.6" width="2.4" height="1.5" fill="#3ea2e6" opacity="0.9"/><rect x="0" y="1.9" width="12" height="0.9" fill="#3ea2e6" opacity="0.45"/><rect x="0" y="6.6" width="12" height="0.9" fill="#3ea2e6" opacity="0.45"/><rect x="5.2" y="2" width="0.9" height="10" fill="#3ea2e6" opacity="0.15"/></svg></div>
<div class="th r c-ji" style="width:61px"><span class="sc" style="letter-spacing:0.27px;margin-right:-0.27px"><b>J</b>INÉ</span><svg class="gi" viewBox="0 0 12 12"><rect x="0" y="0" width="12" height="12" fill="#c6ffff" opacity=".93"/><rect x="2.3" y="2.9" width="2.6" height="1.9" fill="#3ea2e6" opacity="0.9"/><rect x="7.2" y="2.9" width="2.4" height="1.9" fill="#3ea2e6" opacity="0.9"/><rect x="2.5" y="7.6" width="2.4" height="1.5" fill="#3ea2e6" opacity="0.9"/><rect x="7.2" y="7.6" width="2.4" height="1.5" fill="#3ea2e6" opacity="0.9"/><rect x="0" y="1.9" width="12" height="0.9" fill="#3ea2e6" opacity="0.45"/><rect x="0" y="6.6" width="12" height="0.9" fill="#3ea2e6" opacity="0.45"/><rect x="5.2" y="2" width="0.9" height="10" fill="#3ea2e6" opacity="0.15"/></svg></div>
<div class="th l c-vy" style="width:124px"><span class="sc" style="letter-spacing:0.16px;margin-right:-0.16px"><b>V</b>YSTAVIL</span></div>
</div>
<div class="tr o">
<div class="td l c-p" style="width:26px"></div>
<div class="td l c-zak" style="width:238px"><span style="letter-spacing:0.051px;padding-left:0.025px;margin-right:-0.025px">NAKLADATELSTVÍ JUNIOR</span></div>
<div class="td l c-cis" style="width:84px"><a><span style="letter-spacing:0.752px;padding-left:0.376px;margin-right:-0.376px">1</span></a></div>
<div class="td l c-typ" style="width:65px"><span style="letter-spacing:0.56px;padding-left:0.28px;margin-right:-0.28px">Faktura</span></div>
<div class="td l c-ne" style="width:32px"><svg class="ck" viewBox="0 0 512 512"><path d="M173.898 439.404l-166.4-166.4c-9.997-9.997-9.997-26.206 0-36.204l36.203-36.204c9.997-9.998 26.207-9.998 36.204 0L192 312.69 432.095 72.596c9.997-9.997 26.207-9.997 36.204 0l36.203 36.204c9.997 9.997 9.997 26.206 0 36.204l-294.4 294.401c-9.998 9.997-26.207 9.997-36.204-.001z"/></svg></div>
<div class="td l c-vn" style="width:33px"><svg class="ck" viewBox="0 0 512 512"><path d="M173.898 439.404l-166.4-166.4c-9.997-9.997-9.997-26.206 0-36.204l36.203-36.204c9.997-9.998 26.207-9.998 36.204 0L192 312.69 432.095 72.596c9.997-9.997 26.207-9.997 36.204 0l36.203 36.204c9.997 9.997 9.997 26.206 0 36.204l-294.4 294.401c-9.998 9.997-26.207 9.997-36.204-.001z"/></svg></div>
<div class="td l c-obj" style="width:123px"></div>
<div class="td l c-dat" style="width:94px"><span style="letter-spacing:0.803px;padding-left:0.402px;margin-right:-0.402px">31.12.2006</span></div>
<div class="td l c-uzp" style="width:115px"><span style="letter-spacing:0.803px;padding-left:0.402px;margin-right:-0.402px">31.12.2006</span></div>
<div class="td l c-spl" style="width:110px"><span style="letter-spacing:0.803px;padding-left:0.402px;margin-right:-0.402px">31.12.2006</span></div>
<div class="td r c-po" style="width:84px"><span style="letter-spacing:1.01px;padding-left:0.505px;margin-right:-0.505px">5511</span></div>
<div class="td l c-skl" style="width:172px"><span style="letter-spacing:-0.035px;padding-left:-0.018px;margin-right:0.018px">CENTRÁLNÍ SKLAD</span></div>
<div class="td r c-ks" style="width:47px"><span style="letter-spacing:0.758px;padding-left:0.379px;margin-right:-0.379px">789</span></div>
<div class="td r c-dpc" style="width:90px"><span style="letter-spacing:0.752px;padding-left:0.376px;margin-right:-0.376px">0</span></div>
<div class="td r c-bez" style="width:94px"><span style="letter-spacing:0.787px;padding-left:0.394px;margin-right:-0.394px">96288.06</span></div>
<div class="td r c-sd" style="width:77px"><span style="letter-spacing:0.927px;padding-left:0.464px;margin-right:-0.464px">101102</span></div>
<div class="td r c-zap" style="width:89px"><span style="letter-spacing:0.927px;padding-left:0.464px;margin-right:-0.464px">101102</span></div>
<div class="td r c-dl" style="width:66px"><a><span style="letter-spacing:0.752px;padding-left:0.376px;margin-right:-0.376px">0</span></a></div>
<div class="td r c-ji" style="width:61px"><span style="letter-spacing:0.752px;padding-left:0.376px;margin-right:-0.376px">0</span></div>
<div class="td l c-vy" style="width:124px"><span style="letter-spacing:0.476px;padding-left:0.238px;margin-right:-0.238px">Jana Staňková</span></div>
</div>
<div class="tr e">
<div class="td l c-p" style="width:26px"><svg class="ck" viewBox="0 0 512 512"><path d="M173.898 439.404l-166.4-166.4c-9.997-9.997-9.997-26.206 0-36.204l36.203-36.204c9.997-9.998 26.207-9.998 36.204 0L192 312.69 432.095 72.596c9.997-9.997 26.207-9.997 36.204 0l36.203 36.204c9.997 9.997 9.997 26.206 0 36.204l-294.4 294.401c-9.998 9.997-26.207 9.997-36.204-.001z"/></svg></div>
<div class="td l c-zak" style="width:238px"><span style="letter-spacing:0.672px;padding-left:0.336px;margin-right:-0.336px">opravy stavu-reklamacie</span></div>
<div class="td l c-cis" style="width:84px"><a><span style="letter-spacing:0.885px;padding-left:0.443px;margin-right:-0.443px">11070002</span></a></div>
<div class="td l c-typ" style="width:65px"><span style="letter-spacing:0.56px;padding-left:0.28px;margin-right:-0.28px">Faktura</span></div>
<div class="td l c-ne" style="width:32px"></div>
<div class="td l c-vn" style="width:33px"><svg class="ck" viewBox="0 0 512 512"><path d="M173.898 439.404l-166.4-166.4c-9.997-9.997-9.997-26.206 0-36.204l36.203-36.204c9.997-9.998 26.207-9.998 36.204 0L192 312.69 432.095 72.596c9.997-9.997 26.207-9.997 36.204 0l36.203 36.204c9.997 9.997 9.997 26.206 0 36.204l-294.4 294.401c-9.998 9.997-26.207 9.997-36.204-.001z"/></svg></div>
<div class="td l c-obj" style="width:123px"></div>
<div class="td l c-dat" style="width:94px"><span style="letter-spacing:0.803px;padding-left:0.402px;margin-right:-0.402px">28.12.2007</span></div>
<div class="td l c-uzp" style="width:115px"><span style="letter-spacing:0.803px;padding-left:0.402px;margin-right:-0.402px">28.12.2007</span></div>
<div class="td l c-spl" style="width:110px"><span style="letter-spacing:0.803px;padding-left:0.402px;margin-right:-0.402px">28.12.2007</span></div>
<div class="td r c-po" style="width:84px"><span style="letter-spacing:0.756px;padding-left:0.378px;margin-right:-0.378px">5149</span></div>
<div class="td l c-skl" style="width:172px"><span style="letter-spacing:-0.035px;padding-left:-0.018px;margin-right:0.018px">CENTRÁLNÍ SKLAD</span></div>
<div class="td r c-ks" style="width:47px"><span style="letter-spacing:0.756px;padding-left:0.378px;margin-right:-0.378px">8427</span></div>
<div class="td r c-dpc" style="width:90px"><span style="letter-spacing:0.783px;padding-left:0.392px;margin-right:-0.392px">983228.12</span></div>
<div class="td r c-bez" style="width:94px"><span style="letter-spacing:0.787px;padding-left:0.394px;margin-right:-0.394px">48733.96</span></div>
<div class="td r c-sd" style="width:77px"><span style="letter-spacing:0.759px;padding-left:0.38px;margin-right:-0.38px">49141</span></div>
<div class="td r c-zap" style="width:89px"><span style="letter-spacing:0.759px;padding-left:0.38px;margin-right:-0.38px">49141</span></div>
<div class="td r c-dl" style="width:66px"><a><span style="letter-spacing:0.752px;padding-left:0.376px;margin-right:-0.376px">0</span></a></div>
<div class="td r c-ji" style="width:61px"><span style="letter-spacing:0.752px;padding-left:0.376px;margin-right:-0.376px">0</span></div>
<div class="td l c-vy" style="width:124px"><span style="letter-spacing:0.541px;padding-left:0.271px;margin-right:-0.271px">Stanislav Borák</span></div>
</div>
<div class="tr o">
<div class="td l c-p" style="width:26px"><svg class="ck" viewBox="0 0 512 512"><path d="M173.898 439.404l-166.4-166.4c-9.997-9.997-9.997-26.206 0-36.204l36.203-36.204c9.997-9.998 26.207-9.998 36.204 0L192 312.69 432.095 72.596c9.997-9.997 26.207-9.997 36.204 0l36.203 36.204c9.997 9.997 9.997 26.206 0 36.204l-294.4 294.401c-9.998 9.997-26.207 9.997-36.204-.001z"/></svg></div>
<div class="td l c-zak" style="width:238px"><span style="letter-spacing:0.176px;padding-left:0.088px;margin-right:-0.088px">PEMIC BOOKS, a.s.</span></div>
<div class="td l c-cis" style="width:84px"><a><span style="letter-spacing:0.885px;padding-left:0.443px;margin-right:-0.443px">11080001</span></a></div>
<div class="td l c-typ" style="width:65px"><span style="letter-spacing:0.56px;padding-left:0.28px;margin-right:-0.28px">Faktura</span></div>
<div class="td l c-ne" style="width:32px"></div>
<div class="td l c-vn" style="width:33px"><svg class="ck" viewBox="0 0 512 512"><path d="M173.898 439.404l-166.4-166.4c-9.997-9.997-9.997-26.206 0-36.204l36.203-36.204c9.997-9.998 26.207-9.998 36.204 0L192 312.69 432.095 72.596c9.997-9.997 26.207-9.997 36.204 0l36.203 36.204c9.997 9.997 9.997 26.206 0 36.204l-294.4 294.401c-9.998 9.997-26.207 9.997-36.204-.001z"/></svg></div>
<div class="td l c-obj" style="width:123px"></div>
<div class="td l c-dat" style="width:94px"><span style="letter-spacing:0.803px;padding-left:0.402px;margin-right:-0.402px">31.07.2008</span></div>
<div class="td l c-uzp" style="width:115px"><span style="letter-spacing:0.803px;padding-left:0.402px;margin-right:-0.402px">31.07.2008</span></div>
<div class="td l c-spl" style="width:110px"><span style="letter-spacing:0.803px;padding-left:0.402px;margin-right:-0.402px">28.10.2008</span></div>
<div class="td r c-po" style="width:84px"><span style="letter-spacing:0.756px;padding-left:0.378px;margin-right:-0.378px">4844</span></div>
<div class="td l c-skl" style="width:172px"><span style="letter-spacing:0.396px;padding-left:0.198px;margin-right:-0.198px">PEMIC-knižní velkoob</span></div>
<div class="td r c-ks" style="width:47px"><span style="letter-spacing:0.758px;padding-left:0.379px;margin-right:-0.379px">198</span></div>
<div class="td r c-dpc" style="width:90px"><span style="letter-spacing:0.759px;padding-left:0.38px;margin-right:-0.38px">25622</span></div>
<div class="td r c-bez" style="width:94px"><span style="letter-spacing:0.79px;padding-left:0.395px;margin-right:-0.395px">9395.21</span></div>
<div class="td r c-sd" style="width:77px"><span style="letter-spacing:0.759px;padding-left:0.38px;margin-right:-0.38px">10241</span></div>
<div class="td r c-zap" style="width:89px"><span style="letter-spacing:0.759px;padding-left:0.38px;margin-right:-0.38px">10241</span></div>
<div class="td r c-dl" style="width:66px"><a><span style="letter-spacing:0.752px;padding-left:0.376px;margin-right:-0.376px">0</span></a></div>
<div class="td r c-ji" style="width:61px"><span style="letter-spacing:0.752px;padding-left:0.376px;margin-right:-0.376px">0</span></div>
<div class="td l c-vy" style="width:124px"><span style="letter-spacing:0.541px;padding-left:0.271px;margin-right:-0.271px">Stanislav Borák</span></div>
</div>
<div class="tr e">
<div class="td l c-p" style="width:26px"></div>
<div class="td l c-zak" style="width:238px"><span style="letter-spacing:0.393px;padding-left:0.197px;margin-right:-0.197px">Eva Vlčková</span></div>
<div class="td l c-cis" style="width:84px"><a><span style="letter-spacing:0.885px;padding-left:0.443px;margin-right:-0.443px">11080002</span></a></div>
<div class="td l c-typ" style="width:65px"><span style="letter-spacing:0.56px;padding-left:0.28px;margin-right:-0.28px">Faktura</span></div>
<div class="td l c-ne" style="width:32px"></div>
<div class="td l c-vn" style="width:33px"></div>
<div class="td l c-obj" style="width:123px"></div>
<div class="td l c-dat" style="width:94px"><span style="letter-spacing:0.903px;padding-left:0.452px;margin-right:-0.452px">10.11.2008</span></div>
<div class="td l c-uzp" style="width:115px"><span style="letter-spacing:0.903px;padding-left:0.452px;margin-right:-0.452px">10.11.2008</span></div>
<div class="td l c-spl" style="width:110px"><span style="letter-spacing:0.903px;padding-left:0.452px;margin-right:-0.452px">20.11.2008</span></div>
<div class="td r c-po" style="width:84px"><span style="letter-spacing:0.756px;padding-left:0.378px;margin-right:-0.378px">4821</span></div>
<div class="td l c-skl" style="width:172px"><span style="letter-spacing:-0.035px;padding-left:-0.018px;margin-right:0.018px">CENTRÁLNÍ SKLAD</span></div>
<div class="td r c-ks" style="width:47px"><span style="letter-spacing:0.752px;padding-left:0.376px;margin-right:-0.376px">0</span></div>
<div class="td r c-dpc" style="width:90px"><span style="letter-spacing:0.752px;padding-left:0.376px;margin-right:-0.376px">0</span></div>
<div class="td r c-bez" style="width:94px"><span style="letter-spacing:0.752px;padding-left:0.376px;margin-right:-0.376px">0</span></div>
<div class="td r c-sd" style="width:77px"><span style="letter-spacing:0.752px;padding-left:0.376px;margin-right:-0.376px">0</span></div>
<div class="td r c-zap" style="width:89px"><span style="letter-spacing:0.752px;padding-left:0.376px;margin-right:-0.376px">0</span></div>
<div class="td r c-dl" style="width:66px"><a><span style="letter-spacing:0.752px;padding-left:0.376px;margin-right:-0.376px">0</span></a></div>
<div class="td r c-ji" style="width:61px"><span style="letter-spacing:0.752px;padding-left:0.376px;margin-right:-0.376px">0</span></div>
<div class="td l c-vy" style="width:124px"><span style="letter-spacing:0.541px;padding-left:0.271px;margin-right:-0.271px">Stanislav Borák</span></div>
</div>
<div class="tr o">
<div class="td l c-p" style="width:26px"><svg class="ck" viewBox="0 0 512 512"><path d="M173.898 439.404l-166.4-166.4c-9.997-9.997-9.997-26.206 0-36.204l36.203-36.204c9.997-9.998 26.207-9.998 36.204 0L192 312.69 432.095 72.596c9.997-9.997 26.207-9.997 36.204 0l36.203 36.204c9.997 9.997 9.997 26.206 0 36.204l-294.4 294.401c-9.998 9.997-26.207 9.997-36.204-.001z"/></svg></div>
<div class="td l c-zak" style="width:238px"><span style="letter-spacing:0.672px;padding-left:0.336px;margin-right:-0.336px">opravy stavu-reklamacie</span></div>
<div class="td l c-cis" style="width:84px"><a><span style="letter-spacing:0.885px;padding-left:0.443px;margin-right:-0.443px">11080003</span></a></div>
<div class="td l c-typ" style="width:65px"><span style="letter-spacing:0.56px;padding-left:0.28px;margin-right:-0.28px">Faktura</span></div>
<div class="td l c-ne" style="width:32px"></div>
<div class="td l c-vn" style="width:33px"><svg class="ck" viewBox="0 0 512 512"><path d="M173.898 439.404l-166.4-166.4c-9.997-9.997-9.997-26.206 0-36.204l36.203-36.204c9.997-9.998 26.207-9.998 36.204 0L192 312.69 432.095 72.596c9.997-9.997 26.207-9.997 36.204 0l36.203 36.204c9.997 9.997 9.997 26.206 0 36.204l-294.4 294.401c-9.998 9.997-26.207 9.997-36.204-.001z"/></svg></div>
<div class="td l c-obj" style="width:123px"></div>
<div class="td l c-dat" style="width:94px"><span style="letter-spacing:0.903px;padding-left:0.452px;margin-right:-0.452px">30.11.2008</span></div>
<div class="td l c-uzp" style="width:115px"><span style="letter-spacing:0.903px;padding-left:0.452px;margin-right:-0.452px">30.11.2008</span></div>
<div class="td l c-spl" style="width:110px"><span style="letter-spacing:0.903px;padding-left:0.452px;margin-right:-0.452px">30.11.2008</span></div>
<div class="td r c-po" style="width:84px"><span style="letter-spacing:1.01px;padding-left:0.505px;margin-right:-0.505px">4811</span></div>
<div class="td l c-skl" style="width:172px"><span style="letter-spacing:-0.035px;padding-left:-0.018px;margin-right:0.018px">CENTRÁLNÍ SKLAD</span></div>
<div class="td r c-ks" style="width:47px"><span style="letter-spacing:0.752px;padding-left:0.376px;margin-right:-0.376px">81</span></div>
<div class="td r c-dpc" style="width:90px"><span style="letter-spacing:0.756px;padding-left:0.378px;margin-right:-0.378px">4779</span></div>
<div class="td r c-bez" style="width:94px"><span style="letter-spacing:0.79px;padding-left:0.395px;margin-right:-0.395px">4384.53</span></div>
<div class="td r c-sd" style="width:77px"><span style="letter-spacing:0.756px;padding-left:0.378px;margin-right:-0.378px">4779</span></div>
<div class="td r c-zap" style="width:89px"><span style="letter-spacing:0.756px;padding-left:0.378px;margin-right:-0.378px">4779</span></div>
<div class="td r c-dl" style="width:66px"><a><span style="letter-spacing:0.752px;padding-left:0.376px;margin-right:-0.376px">0</span></a></div>
<div class="td r c-ji" style="width:61px"><span style="letter-spacing:0.752px;padding-left:0.376px;margin-right:-0.376px">0</span></div>
<div class="td l c-vy" style="width:124px"><span style="letter-spacing:0.541px;padding-left:0.271px;margin-right:-0.271px">Stanislav Borák</span></div>
</div>
<div class="tr e">
<div class="td l c-p" style="width:26px"></div>
<div class="td l c-zak" style="width:238px"><span style="letter-spacing:0.482px;padding-left:0.241px;margin-right:-0.241px">KONTAKT-knižní distribuce, spo</span></div>
<div class="td l c-cis" style="width:84px"><a><span style="letter-spacing:0.885px;padding-left:0.443px;margin-right:-0.443px">11080004</span></a></div>
<div class="td l c-typ" style="width:65px"><span style="letter-spacing:0.56px;padding-left:0.28px;margin-right:-0.28px">Faktura</span></div>
<div class="td l c-ne" style="width:32px"></div>
<div class="td l c-vn" style="width:33px"><svg class="ck" viewBox="0 0 512 512"><path d="M173.898 439.404l-166.4-166.4c-9.997-9.997-9.997-26.206 0-36.204l36.203-36.204c9.997-9.998 26.207-9.998 36.204 0L192 312.69 432.095 72.596c9.997-9.997 26.207-9.997 36.204 0l36.203 36.204c9.997 9.997 9.997 26.206 0 36.204l-294.4 294.401c-9.998 9.997-26.207 9.997-36.204-.001z"/></svg></div>
<div class="td l c-obj" style="width:123px"></div>
<div class="td l c-dat" style="width:94px"><span style="letter-spacing:0.903px;padding-left:0.452px;margin-right:-0.452px">30.11.2008</span></div>
<div class="td l c-uzp" style="width:115px"><span style="letter-spacing:0.903px;padding-left:0.452px;margin-right:-0.452px">30.11.2008</span></div>
<div class="td l c-spl" style="width:110px"><span style="letter-spacing:0.803px;padding-left:0.402px;margin-right:-0.402px">04.01.2009</span></div>
<div class="td r c-po" style="width:84px"><span style="letter-spacing:0.756px;padding-left:0.378px;margin-right:-0.378px">4776</span></div>
<div class="td l c-skl" style="width:172px"><span style="letter-spacing:0.477px;padding-left:0.238px;margin-right:-0.238px">KONTAKT-knižní distr</span></div>
<div class="td r c-ks" style="width:47px"><span style="letter-spacing:0.758px;padding-left:0.379px;margin-right:-0.379px">946</span></div>
<div class="td r c-dpc" style="width:90px"><span style="letter-spacing:0.758px;padding-left:0.379px;margin-right:-0.379px">150126</span></div>
<div class="td r c-bez" style="width:94px"><span style="letter-spacing:0.783px;padding-left:0.392px;margin-right:-0.392px">137731.04</span></div>
<div class="td r c-sd" style="width:77px"><span style="letter-spacing:0.758px;padding-left:0.379px;margin-right:-0.379px">150127</span></div>
<div class="td r c-zap" style="width:89px"><span style="letter-spacing:0.758px;padding-left:0.379px;margin-right:-0.379px">150127</span></div>
<div class="td r c-dl" style="width:66px"><a><span style="letter-spacing:0.752px;padding-left:0.376px;margin-right:-0.376px">0</span></a></div>
<div class="td r c-ji" style="width:61px"><span style="letter-spacing:0.752px;padding-left:0.376px;margin-right:-0.376px">0</span></div>
<div class="td l c-vy" style="width:124px"><span style="letter-spacing:0.541px;padding-left:0.271px;margin-right:-0.271px">Stanislav Borák</span></div>
</div>
<div class="tr o">
<div class="td l c-p" style="width:26px"></div>
<div class="td l c-zak" style="width:238px"><span style="letter-spacing:0.286px;padding-left:0.143px;margin-right:-0.143px">Jana Poláčková</span></div>
<div class="td l c-cis" style="width:84px"><a><span style="letter-spacing:0.885px;padding-left:0.443px;margin-right:-0.443px">11080005</span></a></div>
<div class="td l c-typ" style="width:65px"><span style="letter-spacing:0.56px;padding-left:0.28px;margin-right:-0.28px">Faktura</span></div>
<div class="td l c-ne" style="width:32px"></div>
<div class="td l c-vn" style="width:33px"></div>
<div class="td l c-obj" style="width:123px"></div>
<div class="td l c-dat" style="width:94px"><span style="letter-spacing:0.803px;padding-left:0.402px;margin-right:-0.402px">09.12.2008</span></div>
<div class="td l c-uzp" style="width:115px"><span style="letter-spacing:0.803px;padding-left:0.402px;margin-right:-0.402px">09.12.2008</span></div>
<div class="td l c-spl" style="width:110px"><span style="letter-spacing:0.803px;padding-left:0.402px;margin-right:-0.402px">19.12.2008</span></div>
<div class="td r c-po" style="width:84px"><span style="letter-spacing:0.756px;padding-left:0.378px;margin-right:-0.378px">4792</span></div>
<div class="td l c-skl" style="width:172px"><span style="letter-spacing:-0.035px;padding-left:-0.018px;margin-right:0.018px">CENTRÁLNÍ SKLAD</span></div>
<div class="td r c-ks" style="width:47px"><span style="letter-spacing:0.752px;padding-left:0.376px;margin-right:-0.376px">0</span></div>
<div class="td r c-dpc" style="width:90px"><span style="letter-spacing:0.752px;padding-left:0.376px;margin-right:-0.376px">0</span></div>
<div class="td r c-bez" style="width:94px"><span style="letter-spacing:0.752px;padding-left:0.376px;margin-right:-0.376px">0</span></div>
<div class="td r c-sd" style="width:77px"><span style="letter-spacing:0.752px;padding-left:0.376px;margin-right:-0.376px">0</span></div>
<div class="td r c-zap" style="width:89px"><span style="letter-spacing:0.752px;padding-left:0.376px;margin-right:-0.376px">0</span></div>
<div class="td r c-dl" style="width:66px"><a><span style="letter-spacing:0.752px;padding-left:0.376px;margin-right:-0.376px">0</span></a></div>
<div class="td r c-ji" style="width:61px"><span style="letter-spacing:0.752px;padding-left:0.376px;margin-right:-0.376px">0</span></div>
<div class="td l c-vy" style="width:124px"><span style="letter-spacing:0.541px;padding-left:0.271px;margin-right:-0.271px">Stanislav Borák</span></div>
</div>
<div class="tr e">
<div class="td l c-p" style="width:26px"></div>
<div class="td l c-zak" style="width:238px"><span style="letter-spacing:0.442px;padding-left:0.221px;margin-right:-0.221px">Blanka Mašková</span></div>
<div class="td l c-cis" style="width:84px"><a><span style="letter-spacing:0.885px;padding-left:0.443px;margin-right:-0.443px">11080006</span></a></div>
<div class="td l c-typ" style="width:65px"><span style="letter-spacing:0.56px;padding-left:0.28px;margin-right:-0.28px">Faktura</span></div>
<div class="td l c-ne" style="width:32px"></div>
<div class="td l c-vn" style="width:33px"><svg class="ck" viewBox="0 0 512 512"><path d="M173.898 439.404l-166.4-166.4c-9.997-9.997-9.997-26.206 0-36.204l36.203-36.204c9.997-9.998 26.207-9.998 36.204 0L192 312.69 432.095 72.596c9.997-9.997 26.207-9.997 36.204 0l36.203 36.204c9.997 9.997 9.997 26.206 0 36.204l-294.4 294.401c-9.998 9.997-26.207 9.997-36.204-.001z"/></svg></div>
<div class="td l c-obj" style="width:123px"></div>
<div class="td l c-dat" style="width:94px"><span style="letter-spacing:0.903px;padding-left:0.452px;margin-right:-0.452px">15.11.2008</span></div>
<div class="td l c-uzp" style="width:115px"><span style="letter-spacing:0.903px;padding-left:0.452px;margin-right:-0.452px">15.11.2008</span></div>
<div class="td l c-spl" style="width:110px"><span style="letter-spacing:0.903px;padding-left:0.452px;margin-right:-0.452px">25.11.2008</span></div>
<div class="td r c-po" style="width:84px"><span style="letter-spacing:0.756px;padding-left:0.378px;margin-right:-0.378px">4816</span></div>
<div class="td l c-skl" style="width:172px"><span style="letter-spacing:-0.035px;padding-left:-0.018px;margin-right:0.018px">CENTRÁLNÍ SKLAD</span></div>
<div class="td r c-ks" style="width:47px"><span style="letter-spacing:0.752px;padding-left:0.376px;margin-right:-0.376px">1</span></div>
<div class="td r c-dpc" style="width:90px"><span style="letter-spacing:0.758px;padding-left:0.379px;margin-right:-0.379px">229</span></div>
<div class="td r c-bez" style="width:94px"><span style="letter-spacing:0.796px;padding-left:0.398px;margin-right:-0.398px">155.05</span></div>
<div class="td r c-sd" style="width:77px"><span style="letter-spacing:0.758px;padding-left:0.379px;margin-right:-0.379px">169</span></div>
<div class="td r c-zap" style="width:89px"><span style="letter-spacing:0.758px;padding-left:0.379px;margin-right:-0.379px">169</span></div>
<div class="td r c-dl" style="width:66px"><a><span style="letter-spacing:0.752px;padding-left:0.376px;margin-right:-0.376px">0</span></a></div>
<div class="td r c-ji" style="width:61px"><span style="letter-spacing:0.752px;padding-left:0.376px;margin-right:-0.376px">0</span></div>
<div class="td l c-vy" style="width:124px"><span style="letter-spacing:0.541px;padding-left:0.271px;margin-right:-0.271px">Stanislav Borák</span></div>
</div>
<div class="tr o">
<div class="td l c-p" style="width:26px"></div>
<div class="td l c-zak" style="width:238px"><span style="letter-spacing:0.672px;padding-left:0.336px;margin-right:-0.336px">opravy stavu-reklamacie</span></div>
<div class="td l c-cis" style="width:84px"><a><span style="letter-spacing:0.885px;padding-left:0.443px;margin-right:-0.443px">11080007</span></a></div>
<div class="td l c-typ" style="width:65px"><span style="letter-spacing:0.56px;padding-left:0.28px;margin-right:-0.28px">Faktura</span></div>
<div class="td l c-ne" style="width:32px"></div>
<div class="td l c-vn" style="width:33px"><svg class="ck" viewBox="0 0 512 512"><path d="M173.898 439.404l-166.4-166.4c-9.997-9.997-9.997-26.206 0-36.204l36.203-36.204c9.997-9.998 26.207-9.998 36.204 0L192 312.69 432.095 72.596c9.997-9.997 26.207-9.997 36.204 0l36.203 36.204c9.997 9.997 9.997 26.206 0 36.204l-294.4 294.401c-9.998 9.997-26.207 9.997-36.204-.001z"/></svg></div>
<div class="td l c-obj" style="width:123px"></div>
<div class="td l c-dat" style="width:94px"><span style="letter-spacing:0.903px;padding-left:0.452px;margin-right:-0.452px">30.11.2008</span></div>
<div class="td l c-uzp" style="width:115px"><span style="letter-spacing:0.903px;padding-left:0.452px;margin-right:-0.452px">30.11.2008</span></div>
<div class="td l c-spl" style="width:110px"><span style="letter-spacing:0.903px;padding-left:0.452px;margin-right:-0.452px">30.11.2008</span></div>
<div class="td r c-po" style="width:84px"><span style="letter-spacing:1.01px;padding-left:0.505px;margin-right:-0.505px">4811</span></div>
<div class="td l c-skl" style="width:172px"><span style="letter-spacing:-0.035px;padding-left:-0.018px;margin-right:0.018px">CENTRÁLNÍ SKLAD</span></div>
<div class="td r c-ks" style="width:47px"><span style="letter-spacing:0.758px;padding-left:0.379px;margin-right:-0.379px">350</span></div>
<div class="td r c-dpc" style="width:90px"><span style="letter-spacing:0.759px;padding-left:0.38px;margin-right:-0.38px">83886</span></div>
<div class="td r c-bez" style="width:94px"><span style="letter-spacing:0.796px;padding-left:0.398px;margin-right:-0.398px">769.72</span></div>
<div class="td r c-sd" style="width:77px"><span style="letter-spacing:0.758px;padding-left:0.379px;margin-right:-0.379px">839</span></div>
<div class="td r c-zap" style="width:89px"><span style="letter-spacing:0.758px;padding-left:0.379px;margin-right:-0.379px">839</span></div>
<div class="td r c-dl" style="width:66px"><a><span style="letter-spacing:0.752px;padding-left:0.376px;margin-right:-0.376px">0</span></a></div>
<div class="td r c-ji" style="width:61px"><span style="letter-spacing:0.752px;padding-left:0.376px;margin-right:-0.376px">0</span></div>
<div class="td l c-vy" style="width:124px"><span style="letter-spacing:0.541px;padding-left:0.271px;margin-right:-0.271px">Stanislav Borák</span></div>
</div>
<div class="tr e">
<div class="td l c-p" style="width:26px"></div>
<div class="td l c-zak" style="width:238px"><span style="letter-spacing:0.672px;padding-left:0.336px;margin-right:-0.336px">opravy stavu-reklamacie</span></div>
<div class="td l c-cis" style="width:84px"><a><span style="letter-spacing:0.885px;padding-left:0.443px;margin-right:-0.443px">11080008</span></a></div>
<div class="td l c-typ" style="width:65px"><span style="letter-spacing:0.56px;padding-left:0.28px;margin-right:-0.28px">Faktura</span></div>
<div class="td l c-ne" style="width:32px"></div>
<div class="td l c-vn" style="width:33px"><svg class="ck" viewBox="0 0 512 512"><path d="M173.898 439.404l-166.4-166.4c-9.997-9.997-9.997-26.206 0-36.204l36.203-36.204c9.997-9.998 26.207-9.998 36.204 0L192 312.69 432.095 72.596c9.997-9.997 26.207-9.997 36.204 0l36.203 36.204c9.997 9.997 9.997 26.206 0 36.204l-294.4 294.401c-9.998 9.997-26.207 9.997-36.204-.001z"/></svg></div>
<div class="td l c-obj" style="width:123px"></div>
<div class="td l c-dat" style="width:94px"><span style="letter-spacing:0.803px;padding-left:0.402px;margin-right:-0.402px">30.12.2008</span></div>
<div class="td l c-uzp" style="width:115px"><span style="letter-spacing:0.803px;padding-left:0.402px;margin-right:-0.402px">30.12.2008</span></div>
<div class="td l c-spl" style="width:110px"><span style="letter-spacing:0.803px;padding-left:0.402px;margin-right:-0.402px">30.12.2008</span></div>
<div class="td r c-po" style="width:84px"><span style="letter-spacing:0.756px;padding-left:0.378px;margin-right:-0.378px">4781</span></div>
<div class="td l c-skl" style="width:172px"><span style="letter-spacing:-0.035px;padding-left:-0.018px;margin-right:0.018px">CENTRÁLNÍ SKLAD</span></div>
<div class="td r c-ks" style="width:47px"><span style="letter-spacing:0.756px;padding-left:0.378px;margin-right:-0.378px">1761</span></div>
<div class="td r c-dpc" style="width:90px"><span style="letter-spacing:0.783px;padding-left:0.392px;margin-right:-0.392px">263835.77</span></div>
<div class="td r c-bez" style="width:94px"><span style="letter-spacing:0.787px;padding-left:0.394px;margin-right:-0.394px">25579.99</span></div>
<div class="td r c-sd" style="width:77px"><span style="letter-spacing:0.759px;padding-left:0.38px;margin-right:-0.38px">26383</span></div>
<div class="td r c-zap" style="width:89px"><span style="letter-spacing:0.759px;padding-left:0.38px;margin-right:-0.38px">26383</span></div>
<div class="td r c-dl" style="width:66px"><a><span style="letter-spacing:0.752px;padding-left:0.376px;margin-right:-0.376px">0</span></a></div>
<div class="td r c-ji" style="width:61px"><span style="letter-spacing:0.752px;padding-left:0.376px;margin-right:-0.376px">0</span></div>
<div class="td l c-vy" style="width:124px"><span style="letter-spacing:0.541px;padding-left:0.271px;margin-right:-0.271px">Stanislav Borák</span></div>
</div>
<div class="tr o">
<div class="td l c-p" style="width:26px"></div>
<div class="td l c-zak" style="width:238px"><span style="letter-spacing:0.653px;padding-left:0.327px;margin-right:-0.327px">Mateřské centrum Putti, o. s.</span></div>
<div class="td l c-cis" style="width:84px"><a><span style="letter-spacing:0.885px;padding-left:0.443px;margin-right:-0.443px">11080009</span></a></div>
<div class="td l c-typ" style="width:65px"><span style="letter-spacing:0.56px;padding-left:0.28px;margin-right:-0.28px">Faktura</span></div>
<div class="td l c-ne" style="width:32px"></div>
<div class="td l c-vn" style="width:33px"><svg class="ck" viewBox="0 0 512 512"><path d="M173.898 439.404l-166.4-166.4c-9.997-9.997-9.997-26.206 0-36.204l36.203-36.204c9.997-9.998 26.207-9.998 36.204 0L192 312.69 432.095 72.596c9.997-9.997 26.207-9.997 36.204 0l36.203 36.204c9.997 9.997 9.997 26.206 0 36.204l-294.4 294.401c-9.998 9.997-26.207 9.997-36.204-.001z"/></svg></div>
<div class="td l c-obj" style="width:123px"></div>
<div class="td l c-dat" style="width:94px"><span style="letter-spacing:0.803px;padding-left:0.402px;margin-right:-0.402px">30.12.2008</span></div>
<div class="td l c-uzp" style="width:115px"><span style="letter-spacing:0.803px;padding-left:0.402px;margin-right:-0.402px">30.12.2008</span></div>
<div class="td l c-spl" style="width:110px"><span style="letter-spacing:0.803px;padding-left:0.402px;margin-right:-0.402px">09.01.2009</span></div>
<div class="td r c-po" style="width:84px"><span style="letter-spacing:0.756px;padding-left:0.378px;margin-right:-0.378px">4771</span></div>
<div class="td l c-skl" style="width:172px"><span style="letter-spacing:0.526px;padding-left:0.263px;margin-right:-0.263px">Mate?ské centrum Put</span></div>
<div class="td r c-ks" style="width:47px"><span style="letter-spacing:0.752px;padding-left:0.376px;margin-right:-0.376px">22</span></div>
<div class="td r c-dpc" style="width:90px"><span style="letter-spacing:0.756px;padding-left:0.378px;margin-right:-0.378px">3478</span></div>
<div class="td r c-bez" style="width:94px"><span style="letter-spacing:0.796px;padding-left:0.398px;margin-right:-0.398px">3190.8</span></div>
<div class="td r c-sd" style="width:77px"><span style="letter-spacing:0.756px;padding-left:0.378px;margin-right:-0.378px">3478</span></div>
<div class="td r c-zap" style="width:89px"><span style="letter-spacing:0.756px;padding-left:0.378px;margin-right:-0.378px">3478</span></div>
<div class="td r c-dl" style="width:66px"><a><span style="letter-spacing:0.752px;padding-left:0.376px;margin-right:-0.376px">0</span></a></div>
<div class="td r c-ji" style="width:61px"><span style="letter-spacing:0.752px;padding-left:0.376px;margin-right:-0.376px">0</span></div>
<div class="td l c-vy" style="width:124px"><span style="letter-spacing:0.541px;padding-left:0.271px;margin-right:-0.271px">Stanislav Borák</span></div>
</div>
<div class="tr e">
<div class="td l c-p" style="width:26px"><svg class="ck" viewBox="0 0 512 512"><path d="M173.898 439.404l-166.4-166.4c-9.997-9.997-9.997-26.206 0-36.204l36.203-36.204c9.997-9.998 26.207-9.998 36.204 0L192 312.69 432.095 72.596c9.997-9.997 26.207-9.997 36.204 0l36.203 36.204c9.997 9.997 9.997 26.206 0 36.204l-294.4 294.401c-9.998 9.997-26.207 9.997-36.204-.001z"/></svg></div>
<div class="td l c-zak" style="width:238px"><span style="letter-spacing:0.447px;padding-left:0.224px;margin-right:-0.224px">Gabrielová Petra</span></div>
<div class="td l c-cis" style="width:84px"><a><span style="letter-spacing:0.885px;padding-left:0.443px;margin-right:-0.443px">11080010</span></a></div>
<div class="td l c-typ" style="width:65px"><span style="letter-spacing:0.56px;padding-left:0.28px;margin-right:-0.28px">Faktura</span></div>
<div class="td l c-ne" style="width:32px"></div>
<div class="td l c-vn" style="width:33px"><svg class="ck" viewBox="0 0 512 512"><path d="M173.898 439.404l-166.4-166.4c-9.997-9.997-9.997-26.206 0-36.204l36.203-36.204c9.997-9.998 26.207-9.998 36.204 0L192 312.69 432.095 72.596c9.997-9.997 26.207-9.997 36.204 0l36.203 36.204c9.997 9.997 9.997 26.206 0 36.204l-294.4 294.401c-9.998 9.997-26.207 9.997-36.204-.001z"/></svg></div>
<div class="td l c-obj" style="width:123px"></div>
<div class="td l c-dat" style="width:94px"><span style="letter-spacing:0.803px;padding-left:0.402px;margin-right:-0.402px">26.05.2009</span></div>
<div class="td l c-uzp" style="width:115px"><span style="letter-spacing:0.803px;padding-left:0.402px;margin-right:-0.402px">26.05.2009</span></div>
<div class="td l c-spl" style="width:110px"><span style="letter-spacing:0.803px;padding-left:0.402px;margin-right:-0.402px">05.06.2009</span></div>
<div class="td r c-po" style="width:84px"><span style="letter-spacing:0.756px;padding-left:0.378px;margin-right:-0.378px">4624</span></div>
<div class="td l c-skl" style="width:172px"><span style="letter-spacing:-0.035px;padding-left:-0.018px;margin-right:0.018px">CENTRÁLNÍ SKLAD</span></div>
<div class="td r c-ks" style="width:47px"><span style="letter-spacing:0.752px;padding-left:0.376px;margin-right:-0.376px">4</span></div>
<div class="td r c-dpc" style="width:90px"><span style="letter-spacing:0.758px;padding-left:0.379px;margin-right:-0.379px">586</span></div>
<div class="td r c-bez" style="width:94px"><span style="letter-spacing:0.796px;padding-left:0.398px;margin-right:-0.398px">456.98</span></div>
<div class="td r c-sd" style="width:77px"><span style="letter-spacing:0.758px;padding-left:0.379px;margin-right:-0.379px">498</span></div>
<div class="td r c-zap" style="width:89px"><span style="letter-spacing:0.758px;padding-left:0.379px;margin-right:-0.379px">498</span></div>
<div class="td r c-dl" style="width:66px"><a><span style="letter-spacing:0.752px;padding-left:0.376px;margin-right:-0.376px">0</span></a></div>
<div class="td r c-ji" style="width:61px"><span style="letter-spacing:0.752px;padding-left:0.376px;margin-right:-0.376px">0</span></div>
<div class="td l c-vy" style="width:124px"><span style="letter-spacing:0.541px;padding-left:0.271px;margin-right:-0.271px">Stanislav Borák</span></div>
</div>
<div class="tr o">
<div class="td l c-p" style="width:26px"></div>
<div class="td l c-zak" style="width:238px"><span style="letter-spacing:0.504px;padding-left:0.252px;margin-right:-0.252px">Rodičovské centrum Kolečko</span></div>
<div class="td l c-cis" style="width:84px"><a><span style="letter-spacing:1.01px;padding-left:0.505px;margin-right:-0.505px">11080011</span></a></div>
<div class="td l c-typ" style="width:65px"><span style="letter-spacing:0.56px;padding-left:0.28px;margin-right:-0.28px">Faktura</span></div>
<div class="td l c-ne" style="width:32px"></div>
<div class="td l c-vn" style="width:33px"><svg class="ck" viewBox="0 0 512 512"><path d="M173.898 439.404l-166.4-166.4c-9.997-9.997-9.997-26.206 0-36.204l36.203-36.204c9.997-9.998 26.207-9.998 36.204 0L192 312.69 432.095 72.596c9.997-9.997 26.207-9.997 36.204 0l36.203 36.204c9.997 9.997 9.997 26.206 0 36.204l-294.4 294.401c-9.998 9.997-26.207 9.997-36.204-.001z"/></svg></div>
<div class="td l c-obj" style="width:123px"></div>
<div class="td l c-dat" style="width:94px"><span style="letter-spacing:0.803px;padding-left:0.402px;margin-right:-0.402px">31.10.2009</span></div>
<div class="td l c-uzp" style="width:115px"><span style="letter-spacing:0.803px;padding-left:0.402px;margin-right:-0.402px">31.10.2009</span></div>
<div class="td l c-spl" style="width:110px"><span style="letter-spacing:0.903px;padding-left:0.452px;margin-right:-0.452px">10.11.2009</span></div>
<div class="td r c-po" style="width:84px"><span style="letter-spacing:0.756px;padding-left:0.378px;margin-right:-0.378px">4466</span></div>
<div class="td l c-skl" style="width:172px"><span style="letter-spacing:0.506px;padding-left:0.253px;margin-right:-0.253px">Rodi?ovské centrum K</span></div>
<div class="td r c-ks" style="width:47px"><span style="letter-spacing:0.752px;padding-left:0.376px;margin-right:-0.376px">15</span></div>
<div class="td r c-dpc" style="width:90px"><span style="letter-spacing:0.756px;padding-left:0.378px;margin-right:-0.378px">2725</span></div>
<div class="td r c-bez" style="width:94px"><span style="letter-spacing:0.79px;padding-left:0.395px;margin-right:-0.395px">2500.01</span></div>
<div class="td r c-sd" style="width:77px"><span style="letter-spacing:0.756px;padding-left:0.378px;margin-right:-0.378px">2725</span></div>
<div class="td r c-zap" style="width:89px"><span style="letter-spacing:0.756px;padding-left:0.378px;margin-right:-0.378px">2725</span></div>
<div class="td r c-dl" style="width:66px"><a><span style="letter-spacing:0.752px;padding-left:0.376px;margin-right:-0.376px">0</span></a></div>
<div class="td r c-ji" style="width:61px"><span style="letter-spacing:0.752px;padding-left:0.376px;margin-right:-0.376px">0</span></div>
<div class="td l c-vy" style="width:124px"><span style="letter-spacing:0.541px;padding-left:0.271px;margin-right:-0.271px">Stanislav Borák</span></div>
</div>
<div class="tr e">
<div class="td l c-p" style="width:26px"></div>
<div class="td l c-zak" style="width:238px"><span style="letter-spacing:0.672px;padding-left:0.336px;margin-right:-0.336px">opravy stavu-reklamacie</span></div>
<div class="td l c-cis" style="width:84px"><a><span style="letter-spacing:0.885px;padding-left:0.443px;margin-right:-0.443px">11080012</span></a></div>
<div class="td l c-typ" style="width:65px"><span style="letter-spacing:0.56px;padding-left:0.28px;margin-right:-0.28px">Faktura</span></div>
<div class="td l c-ne" style="width:32px"></div>
<div class="td l c-vn" style="width:33px"><svg class="ck" viewBox="0 0 512 512"><path d="M173.898 439.404l-166.4-166.4c-9.997-9.997-9.997-26.206 0-36.204l36.203-36.204c9.997-9.998 26.207-9.998 36.204 0L192 312.69 432.095 72.596c9.997-9.997 26.207-9.997 36.204 0l36.203 36.204c9.997 9.997 9.997 26.206 0 36.204l-294.4 294.401c-9.998 9.997-26.207 9.997-36.204-.001z"/></svg></div>
<div class="td l c-obj" style="width:123px"></div>
<div class="td l c-dat" style="width:94px"><span style="letter-spacing:0.803px;padding-left:0.402px;margin-right:-0.402px">31.10.2009</span></div>
<div class="td l c-uzp" style="width:115px"><span style="letter-spacing:0.803px;padding-left:0.402px;margin-right:-0.402px">31.10.2009</span></div>
<div class="td l c-spl" style="width:110px"><span style="letter-spacing:0.803px;padding-left:0.402px;margin-right:-0.402px">31.10.2009</span></div>
<div class="td r c-po" style="width:84px"><span style="letter-spacing:0.756px;padding-left:0.378px;margin-right:-0.378px">4476</span></div>
<div class="td l c-skl" style="width:172px"><span style="letter-spacing:0.731px;padding-left:0.365px;margin-right:-0.365px">opravy stavu-reklama</span></div>
<div class="td r c-ks" style="width:47px"><span style="letter-spacing:0.758px;padding-left:0.379px;margin-right:-0.379px">381</span></div>
<div class="td r c-dpc" style="width:90px"><span style="letter-spacing:0.759px;padding-left:0.38px;margin-right:-0.38px">98099</span></div>
<div class="td r c-bez" style="width:94px"><span style="letter-spacing:0.787px;padding-left:0.394px;margin-right:-0.394px">44939.68</span></div>
<div class="td r c-sd" style="width:77px"><span style="letter-spacing:0.759px;padding-left:0.38px;margin-right:-0.38px">49050</span></div>
<div class="td r c-zap" style="width:89px"><span style="letter-spacing:0.759px;padding-left:0.38px;margin-right:-0.38px">49050</span></div>
<div class="td r c-dl" style="width:66px"><a><span style="letter-spacing:0.752px;padding-left:0.376px;margin-right:-0.376px">0</span></a></div>
<div class="td r c-ji" style="width:61px"><span style="letter-spacing:0.752px;padding-left:0.376px;margin-right:-0.376px">0</span></div>
<div class="td l c-vy" style="width:124px"><span style="letter-spacing:0.541px;padding-left:0.271px;margin-right:-0.271px">Stanislav Borák</span></div>
</div>
<div class="tr o">
<div class="td l c-p" style="width:26px"></div>
<div class="td l c-zak" style="width:238px"><span style="letter-spacing:0.473px;padding-left:0.236px;margin-right:-0.236px">Knižný veľkoobchod PEMIC, s.r.</span></div>
<div class="td l c-cis" style="width:84px"><a><span style="letter-spacing:0.885px;padding-left:0.443px;margin-right:-0.443px">11080013</span></a></div>
<div class="td l c-typ" style="width:65px"><span style="letter-spacing:0.56px;padding-left:0.28px;margin-right:-0.28px">Faktura</span></div>
<div class="td l c-ne" style="width:32px"></div>
<div class="td l c-vn" style="width:33px"><svg class="ck" viewBox="0 0 512 512"><path d="M173.898 439.404l-166.4-166.4c-9.997-9.997-9.997-26.206 0-36.204l36.203-36.204c9.997-9.998 26.207-9.998 36.204 0L192 312.69 432.095 72.596c9.997-9.997 26.207-9.997 36.204 0l36.203 36.204c9.997 9.997 9.997 26.206 0 36.204l-294.4 294.401c-9.998 9.997-26.207 9.997-36.204-.001z"/></svg></div>
<div class="td l c-obj" style="width:123px"></div>
<div class="td l c-dat" style="width:94px"><span style="letter-spacing:0.803px;padding-left:0.402px;margin-right:-0.402px">30.10.2009</span></div>
<div class="td l c-uzp" style="width:115px"><span style="letter-spacing:0.803px;padding-left:0.402px;margin-right:-0.402px">30.10.2009</span></div>
<div class="td l c-spl" style="width:110px"><span style="letter-spacing:0.803px;padding-left:0.402px;margin-right:-0.402px">28.01.2010</span></div>
<div class="td r c-po" style="width:84px"><span style="letter-spacing:0.756px;padding-left:0.378px;margin-right:-0.378px">4387</span></div>
<div class="td l c-skl" style="width:172px"><span style="letter-spacing:0.405px;padding-left:0.203px;margin-right:-0.203px">KV PEMIC, s.r.o.</span></div>
<div class="td r c-ks" style="width:47px"><span style="letter-spacing:0.758px;padding-left:0.379px;margin-right:-0.379px">103</span></div>
<div class="td r c-dpc" style="width:90px"><span style="letter-spacing:0.796px;padding-left:0.398px;margin-right:-0.398px">303.85</span></div>
<div class="td r c-bez" style="width:94px"><span style="letter-spacing:0.796px;padding-left:0.398px;margin-right:-0.398px">303.85</span></div>
<div class="td r c-sd" style="width:77px"><span style="letter-spacing:0.758px;padding-left:0.379px;margin-right:-0.379px">304</span></div>
<div class="td r c-zap" style="width:89px"><span style="letter-spacing:0.758px;padding-left:0.379px;margin-right:-0.379px">304</span></div>
<div class="td r c-dl" style="width:66px"><a><span style="letter-spacing:0.752px;padding-left:0.376px;margin-right:-0.376px">0</span></a></div>
<div class="td r c-ji" style="width:61px"><span style="letter-spacing:0.752px;padding-left:0.376px;margin-right:-0.376px">0</span></div>
<div class="td l c-vy" style="width:124px"><span style="letter-spacing:0.541px;padding-left:0.271px;margin-right:-0.271px">Stanislav Borák</span></div>
</div>
<div class="tr e">
<div class="td l c-p" style="width:26px"><svg class="ck" viewBox="0 0 512 512"><path d="M173.898 439.404l-166.4-166.4c-9.997-9.997-9.997-26.206 0-36.204l36.203-36.204c9.997-9.998 26.207-9.998 36.204 0L192 312.69 432.095 72.596c9.997-9.997 26.207-9.997 36.204 0l36.203 36.204c9.997 9.997 9.997 26.206 0 36.204l-294.4 294.401c-9.998 9.997-26.207 9.997-36.204-.001z"/></svg></div>
<div class="td l c-zak" style="width:238px"><span style="letter-spacing:0.672px;padding-left:0.336px;margin-right:-0.336px">opravy stavu-reklamacie</span></div>
<div class="td l c-cis" style="width:84px"><a><span style="letter-spacing:0.885px;padding-left:0.443px;margin-right:-0.443px">11080014</span></a></div>
<div class="td l c-typ" style="width:65px"><span style="letter-spacing:0.56px;padding-left:0.28px;margin-right:-0.28px">Faktura</span></div>
<div class="td l c-ne" style="width:32px"></div>
<div class="td l c-vn" style="width:33px"><svg class="ck" viewBox="0 0 512 512"><path d="M173.898 439.404l-166.4-166.4c-9.997-9.997-9.997-26.206 0-36.204l36.203-36.204c9.997-9.998 26.207-9.998 36.204 0L192 312.69 432.095 72.596c9.997-9.997 26.207-9.997 36.204 0l36.203 36.204c9.997 9.997 9.997 26.206 0 36.204l-294.4 294.401c-9.998 9.997-26.207 9.997-36.204-.001z"/></svg></div>
<div class="td l c-obj" style="width:123px"></div>
<div class="td l c-dat" style="width:94px"><span style="letter-spacing:0.803px;padding-left:0.402px;margin-right:-0.402px">31.10.2009</span></div>
<div class="td l c-uzp" style="width:115px"><span style="letter-spacing:0.803px;padding-left:0.402px;margin-right:-0.402px">31.10.2009</span></div>
<div class="td l c-spl" style="width:110px"><span style="letter-spacing:0.803px;padding-left:0.402px;margin-right:-0.402px">31.10.2009</span></div>
<div class="td r c-po" style="width:84px"><span style="letter-spacing:0.756px;padding-left:0.378px;margin-right:-0.378px">4476</span></div>
<div class="td l c-skl" style="width:172px"><span style="letter-spacing:-0.035px;padding-left:-0.018px;margin-right:0.018px">CENTRÁLNÍ SKLAD</span></div>
<div class="td r c-ks" style="width:47px"><span style="letter-spacing:1.091px;padding-left:0.545px;margin-right:-0.545px">113</span></div>
<div class="td r c-dpc" style="width:90px"><span style="letter-spacing:0.759px;padding-left:0.38px;margin-right:-0.38px">21007</span></div>
<div class="td r c-bez" style="width:94px"><span style="letter-spacing:0.787px;padding-left:0.394px;margin-right:-0.394px">19272.63</span></div>
<div class="td r c-sd" style="width:77px"><span style="letter-spacing:0.759px;padding-left:0.38px;margin-right:-0.38px">21007</span></div>
<div class="td r c-zap" style="width:89px"><span style="letter-spacing:0.759px;padding-left:0.38px;margin-right:-0.38px">21007</span></div>
<div class="td r c-dl" style="width:66px"><a><span style="letter-spacing:0.752px;padding-left:0.376px;margin-right:-0.376px">0</span></a></div>
<div class="td r c-ji" style="width:61px"><span style="letter-spacing:0.752px;padding-left:0.376px;margin-right:-0.376px">0</span></div>
<div class="td l c-vy" style="width:124px"><span style="letter-spacing:0.541px;padding-left:0.271px;margin-right:-0.271px">Stanislav Borák</span></div>
</div>
<div class="tr o hov">
<div class="td l c-p" style="width:26px"><svg class="ck" viewBox="0 0 512 512"><path d="M173.898 439.404l-166.4-166.4c-9.997-9.997-9.997-26.206 0-36.204l36.203-36.204c9.997-9.998 26.207-9.998 36.204 0L192 312.69 432.095 72.596c9.997-9.997 26.207-9.997 36.204 0l36.203 36.204c9.997 9.997 9.997 26.206 0 36.204l-294.4 294.401c-9.998 9.997-26.207 9.997-36.204-.001z"/></svg></div>
<div class="td l c-zak" style="width:238px"><span style="letter-spacing:0.672px;padding-left:0.336px;margin-right:-0.336px">opravy stavu-reklamacie</span></div>
<div class="td l c-cis" style="width:84px"><a><span style="letter-spacing:0.885px;padding-left:0.443px;margin-right:-0.443px">11080015</span></a></div>
<div class="td l c-typ" style="width:65px"><span style="letter-spacing:0.56px;padding-left:0.28px;margin-right:-0.28px">Faktura</span></div>
<div class="td l c-ne" style="width:32px"></div>
<div class="td l c-vn" style="width:33px"><svg class="ck" viewBox="0 0 512 512"><path d="M173.898 439.404l-166.4-166.4c-9.997-9.997-9.997-26.206 0-36.204l36.203-36.204c9.997-9.998 26.207-9.998 36.204 0L192 312.69 432.095 72.596c9.997-9.997 26.207-9.997 36.204 0l36.203 36.204c9.997 9.997 9.997 26.206 0 36.204l-294.4 294.401c-9.998 9.997-26.207 9.997-36.204-.001z"/></svg></div>
<div class="td l c-obj" style="width:123px"></div>
<div class="td l c-dat" style="width:94px"><span style="letter-spacing:0.803px;padding-left:0.402px;margin-right:-0.402px">31.10.2009</span></div>
<div class="td l c-uzp" style="width:115px"><span style="letter-spacing:0.803px;padding-left:0.402px;margin-right:-0.402px">31.10.2009</span></div>
<div class="td l c-spl" style="width:110px"><span style="letter-spacing:0.803px;padding-left:0.402px;margin-right:-0.402px">31.10.2009</span></div>
<div class="td r c-po" style="width:84px"><span style="letter-spacing:0.756px;padding-left:0.378px;margin-right:-0.378px">4476</span></div>
<div class="td l c-skl" style="width:172px"><span style="letter-spacing:-0.035px;padding-left:-0.018px;margin-right:0.018px">CENTRÁLNÍ SKLAD</span></div>
<div class="td r c-ks" style="width:47px"><span style="letter-spacing:0.752px;padding-left:0.376px;margin-right:-0.376px">18</span></div>
<div class="td r c-dpc" style="width:90px"><span style="letter-spacing:0.756px;padding-left:0.378px;margin-right:-0.378px">4772</span></div>
<div class="td r c-bez" style="width:94px"><span style="letter-spacing:0.79px;padding-left:0.395px;margin-right:-0.395px">4373.42</span></div>
<div class="td r c-sd" style="width:77px"><span style="letter-spacing:0.756px;padding-left:0.378px;margin-right:-0.378px">4772</span></div>
<div class="td r c-zap" style="width:89px"><span style="letter-spacing:0.756px;padding-left:0.378px;margin-right:-0.378px">4772</span></div>
<div class="td r c-dl" style="width:66px"><a><span style="letter-spacing:0.752px;padding-left:0.376px;margin-right:-0.376px">0</span></a></div>
<div class="td r c-ji" style="width:61px"><span style="letter-spacing:0.752px;padding-left:0.376px;margin-right:-0.376px">0</span></div>
<div class="td l c-vy" style="width:124px"><span style="letter-spacing:0.541px;padding-left:0.271px;margin-right:-0.271px">Stanislav Borák</span></div>
</div>
<div class="tr e">
<div class="td l c-p" style="width:26px"><svg class="ck" viewBox="0 0 512 512"><path d="M173.898 439.404l-166.4-166.4c-9.997-9.997-9.997-26.206 0-36.204l36.203-36.204c9.997-9.998 26.207-9.998 36.204 0L192 312.69 432.095 72.596c9.997-9.997 26.207-9.997 36.204 0l36.203 36.204c9.997 9.997 9.997 26.206 0 36.204l-294.4 294.401c-9.998 9.997-26.207 9.997-36.204-.001z"/></svg></div>
<div class="td l c-zak" style="width:238px"><span style="letter-spacing:0.672px;padding-left:0.336px;margin-right:-0.336px">opravy stavu-reklamacie</span></div>
<div class="td l c-cis" style="width:84px"><a><span style="letter-spacing:0.885px;padding-left:0.443px;margin-right:-0.443px">11080016</span></a></div>
<div class="td l c-typ" style="width:65px"><span style="letter-spacing:0.56px;padding-left:0.28px;margin-right:-0.28px">Faktura</span></div>
<div class="td l c-ne" style="width:32px"></div>
<div class="td l c-vn" style="width:33px"><svg class="ck" viewBox="0 0 512 512"><path d="M173.898 439.404l-166.4-166.4c-9.997-9.997-9.997-26.206 0-36.204l36.203-36.204c9.997-9.998 26.207-9.998 36.204 0L192 312.69 432.095 72.596c9.997-9.997 26.207-9.997 36.204 0l36.203 36.204c9.997 9.997 9.997 26.206 0 36.204l-294.4 294.401c-9.998 9.997-26.207 9.997-36.204-.001z"/></svg></div>
<div class="td l c-obj" style="width:123px"></div>
<div class="td l c-dat" style="width:94px"><span style="letter-spacing:0.903px;padding-left:0.452px;margin-right:-0.452px">11.12.2009</span></div>
<div class="td l c-uzp" style="width:115px"><span style="letter-spacing:0.903px;padding-left:0.452px;margin-right:-0.452px">11.12.2009</span></div>
<div class="td l c-spl" style="width:110px"><span style="letter-spacing:0.903px;padding-left:0.452px;margin-right:-0.452px">11.12.2009</span></div>
<div class="td r c-po" style="width:84px"><span style="letter-spacing:0.756px;padding-left:0.378px;margin-right:-0.378px">4435</span></div>
<div class="td l c-skl" style="width:172px"><span style="letter-spacing:-0.035px;padding-left:-0.018px;margin-right:0.018px">CENTRÁLNÍ SKLAD</span></div>
<div class="td r c-ks" style="width:47px"><span style="letter-spacing:0.752px;padding-left:0.376px;margin-right:-0.376px">16</span></div>
<div class="td r c-dpc" style="width:90px"><span style="letter-spacing:0.756px;padding-left:0.378px;margin-right:-0.378px">3974</span></div>
<div class="td r c-bez" style="width:94px"><span style="letter-spacing:0.79px;padding-left:0.395px;margin-right:-0.395px">3641.31</span></div>
<div class="td r c-sd" style="width:77px"><span style="letter-spacing:0.756px;padding-left:0.378px;margin-right:-0.378px">3974</span></div>
<div class="td r c-zap" style="width:89px"><span style="letter-spacing:0.756px;padding-left:0.378px;margin-right:-0.378px">3974</span></div>
<div class="td r c-dl" style="width:66px"><a><span style="letter-spacing:0.752px;padding-left:0.376px;margin-right:-0.376px">0</span></a></div>
<div class="td r c-ji" style="width:61px"><span style="letter-spacing:0.752px;padding-left:0.376px;margin-right:-0.376px">0</span></div>
<div class="td l c-vy" style="width:124px"><span style="letter-spacing:0.541px;padding-left:0.271px;margin-right:-0.271px">Stanislav Borák</span></div>
</div>
<div class="tr o">
<div class="td l c-p" style="width:26px"><svg class="ck" viewBox="0 0 512 512"><path d="M173.898 439.404l-166.4-166.4c-9.997-9.997-9.997-26.206 0-36.204l36.203-36.204c9.997-9.998 26.207-9.998 36.204 0L192 312.69 432.095 72.596c9.997-9.997 26.207-9.997 36.204 0l36.203 36.204c9.997 9.997 9.997 26.206 0 36.204l-294.4 294.401c-9.998 9.997-26.207 9.997-36.204-.001z"/></svg></div>
<div class="td l c-zak" style="width:238px"><span style="letter-spacing:0.672px;padding-left:0.336px;margin-right:-0.336px">opravy stavu-reklamacie</span></div>
<div class="td l c-cis" style="width:84px"><a><span style="letter-spacing:0.885px;padding-left:0.443px;margin-right:-0.443px">11080017</span></a></div>
<div class="td l c-typ" style="width:65px"><span style="letter-spacing:0.56px;padding-left:0.28px;margin-right:-0.28px">Faktura</span></div>
<div class="td l c-ne" style="width:32px"></div>
<div class="td l c-vn" style="width:33px"><svg class="ck" viewBox="0 0 512 512"><path d="M173.898 439.404l-166.4-166.4c-9.997-9.997-9.997-26.206 0-36.204l36.203-36.204c9.997-9.998 26.207-9.998 36.204 0L192 312.69 432.095 72.596c9.997-9.997 26.207-9.997 36.204 0l36.203 36.204c9.997 9.997 9.997 26.206 0 36.204l-294.4 294.401c-9.998 9.997-26.207 9.997-36.204-.001z"/></svg></div>
<div class="td l c-obj" style="width:123px"></div>
<div class="td l c-dat" style="width:94px"><span style="letter-spacing:0.803px;padding-left:0.402px;margin-right:-0.402px">18.12.2009</span></div>
<div class="td l c-uzp" style="width:115px"><span style="letter-spacing:0.803px;padding-left:0.402px;margin-right:-0.402px">18.12.2009</span></div>
<div class="td l c-spl" style="width:110px"><span style="letter-spacing:0.803px;padding-left:0.402px;margin-right:-0.402px">18.12.2009</span></div>
<div class="td r c-po" style="width:84px"><span style="letter-spacing:0.756px;padding-left:0.378px;margin-right:-0.378px">4428</span></div>
<div class="td l c-skl" style="width:172px"><span style="letter-spacing:-0.035px;padding-left:-0.018px;margin-right:0.018px">CENTRÁLNÍ SKLAD</span></div>
<div class="td r c-ks" style="width:47px"><span style="letter-spacing:0.756px;padding-left:0.378px;margin-right:-0.378px">1505</span></div>
<div class="td r c-dpc" style="width:90px"><span style="letter-spacing:0.783px;padding-left:0.392px;margin-right:-0.392px">306160.51</span></div>
<div class="td r c-bez" style="width:94px"><span style="letter-spacing:0.783px;padding-left:0.392px;margin-right:-0.392px">303547.52</span></div>
<div class="td r c-sd" style="width:77px"><span style="letter-spacing:0.758px;padding-left:0.379px;margin-right:-0.379px">306161</span></div>
<div class="td r c-zap" style="width:89px"><span style="letter-spacing:0.758px;padding-left:0.379px;margin-right:-0.379px">306161</span></div>
<div class="td r c-dl" style="width:66px"><a><span style="letter-spacing:0.752px;padding-left:0.376px;margin-right:-0.376px">0</span></a></div>
<div class="td r c-ji" style="width:61px"><span style="letter-spacing:0.752px;padding-left:0.376px;margin-right:-0.376px">0</span></div>
<div class="td l c-vy" style="width:124px"><span style="letter-spacing:0.541px;padding-left:0.271px;margin-right:-0.271px">Stanislav Borák</span></div>
</div>
<div class="tr e">
<div class="td l c-p" style="width:26px"><svg class="ck" viewBox="0 0 512 512"><path d="M173.898 439.404l-166.4-166.4c-9.997-9.997-9.997-26.206 0-36.204l36.203-36.204c9.997-9.998 26.207-9.998 36.204 0L192 312.69 432.095 72.596c9.997-9.997 26.207-9.997 36.204 0l36.203 36.204c9.997 9.997 9.997 26.206 0 36.204l-294.4 294.401c-9.998 9.997-26.207 9.997-36.204-.001z"/></svg></div>
<div class="td l c-zak" style="width:238px"><span style="letter-spacing:0.672px;padding-left:0.336px;margin-right:-0.336px">opravy stavu-reklamacie</span></div>
<div class="td l c-cis" style="width:84px"><a><span style="letter-spacing:1.01px;padding-left:0.505px;margin-right:-0.505px">11100001</span></a></div>
<div class="td l c-typ" style="width:65px"><span style="letter-spacing:0.56px;padding-left:0.28px;margin-right:-0.28px">Faktura</span></div>
<div class="td l c-ne" style="width:32px"></div>
<div class="td l c-vn" style="width:33px"><svg class="ck" viewBox="0 0 512 512"><path d="M173.898 439.404l-166.4-166.4c-9.997-9.997-9.997-26.206 0-36.204l36.203-36.204c9.997-9.998 26.207-9.998 36.204 0L192 312.69 432.095 72.596c9.997-9.997 26.207-9.997 36.204 0l36.203 36.204c9.997 9.997 9.997 26.206 0 36.204l-294.4 294.401c-9.998 9.997-26.207 9.997-36.204-.001z"/></svg></div>
<div class="td l c-obj" style="width:123px"></div>
<div class="td l c-dat" style="width:94px"><span style="letter-spacing:0.803px;padding-left:0.402px;margin-right:-0.402px">24.05.2010</span></div>
<div class="td l c-uzp" style="width:115px"><span style="letter-spacing:0.803px;padding-left:0.402px;margin-right:-0.402px">24.05.2010</span></div>
<div class="td l c-spl" style="width:110px"><span style="letter-spacing:0.803px;padding-left:0.402px;margin-right:-0.402px">24.05.2010</span></div>
<div class="td r c-po" style="width:84px"><span style="letter-spacing:0.756px;padding-left:0.378px;margin-right:-0.378px">4271</span></div>
<div class="td l c-skl" style="width:172px"><span style="letter-spacing:-0.035px;padding-left:-0.018px;margin-right:0.018px">CENTRÁLNÍ SKLAD</span></div>
<div class="td r c-ks" style="width:47px"><span style="letter-spacing:0.752px;padding-left:0.376px;margin-right:-0.376px">1</span></div>
<div class="td r c-dpc" style="width:90px"><span style="letter-spacing:0.758px;padding-left:0.379px;margin-right:-0.379px">179</span></div>
<div class="td r c-bez" style="width:94px"><span style="letter-spacing:0.796px;padding-left:0.398px;margin-right:-0.398px">162.73</span></div>
<div class="td r c-sd" style="width:77px"><span style="letter-spacing:0.758px;padding-left:0.379px;margin-right:-0.379px">179</span></div>
<div class="td r c-zap" style="width:89px"><span style="letter-spacing:0.758px;padding-left:0.379px;margin-right:-0.379px">179</span></div>
<div class="td r c-dl" style="width:66px"><a><span style="letter-spacing:0.752px;padding-left:0.376px;margin-right:-0.376px">0</span></a></div>
<div class="td r c-ji" style="width:61px"><span style="letter-spacing:0.752px;padding-left:0.376px;margin-right:-0.376px">0</span></div>
<div class="td l c-vy" style="width:124px"><span style="letter-spacing:0.541px;padding-left:0.271px;margin-right:-0.271px">Stanislav Borák</span></div>
</div>
<div class="tr o">
<div class="td l c-p" style="width:26px"><svg class="ck" viewBox="0 0 512 512"><path d="M173.898 439.404l-166.4-166.4c-9.997-9.997-9.997-26.206 0-36.204l36.203-36.204c9.997-9.998 26.207-9.998 36.204 0L192 312.69 432.095 72.596c9.997-9.997 26.207-9.997 36.204 0l36.203 36.204c9.997 9.997 9.997 26.206 0 36.204l-294.4 294.401c-9.998 9.997-26.207 9.997-36.204-.001z"/></svg></div>
<div class="td l c-zak" style="width:238px"><span style="letter-spacing:0.672px;padding-left:0.336px;margin-right:-0.336px">opravy stavu-reklamacie</span></div>
<div class="td l c-cis" style="width:84px"><a><span style="letter-spacing:1.01px;padding-left:0.505px;margin-right:-0.505px">11100002</span></a></div>
<div class="td l c-typ" style="width:65px"><span style="letter-spacing:0.56px;padding-left:0.28px;margin-right:-0.28px">Faktura</span></div>
<div class="td l c-ne" style="width:32px"></div>
<div class="td l c-vn" style="width:33px"><svg class="ck" viewBox="0 0 512 512"><path d="M173.898 439.404l-166.4-166.4c-9.997-9.997-9.997-26.206 0-36.204l36.203-36.204c9.997-9.998 26.207-9.998 36.204 0L192 312.69 432.095 72.596c9.997-9.997 26.207-9.997 36.204 0l36.203 36.204c9.997 9.997 9.997 26.206 0 36.204l-294.4 294.401c-9.998 9.997-26.207 9.997-36.204-.001z"/></svg></div>
<div class="td l c-obj" style="width:123px"></div>
<div class="td l c-dat" style="width:94px"><span style="letter-spacing:0.803px;padding-left:0.402px;margin-right:-0.402px">30.07.2010</span></div>
<div class="td l c-uzp" style="width:115px"><span style="letter-spacing:0.803px;padding-left:0.402px;margin-right:-0.402px">30.07.2010</span></div>
<div class="td l c-spl" style="width:110px"><span style="letter-spacing:0.803px;padding-left:0.402px;margin-right:-0.402px">30.07.2010</span></div>
<div class="td r c-po" style="width:84px"><span style="letter-spacing:0.756px;padding-left:0.378px;margin-right:-0.378px">4204</span></div>
<div class="td l c-skl" style="width:172px"><span style="letter-spacing:-0.035px;padding-left:-0.018px;margin-right:0.018px">CENTRÁLNÍ SKLAD</span></div>
<div class="td r c-ks" style="width:47px"><span style="letter-spacing:0.752px;padding-left:0.376px;margin-right:-0.376px">15</span></div>
<div class="td r c-dpc" style="width:90px"><span style="letter-spacing:0.756px;padding-left:0.378px;margin-right:-0.378px">3535</span></div>
<div class="td r c-bez" style="width:94px"><span style="letter-spacing:0.79px;padding-left:0.395px;margin-right:-0.395px">3213.65</span></div>
<div class="td r c-sd" style="width:77px"><span style="letter-spacing:0.756px;padding-left:0.378px;margin-right:-0.378px">3535</span></div>
<div class="td r c-zap" style="width:89px"><span style="letter-spacing:0.756px;padding-left:0.378px;margin-right:-0.378px">3535</span></div>
<div class="td r c-dl" style="width:66px"><a><span style="letter-spacing:0.752px;padding-left:0.376px;margin-right:-0.376px">0</span></a></div>
<div class="td r c-ji" style="width:61px"><span style="letter-spacing:0.752px;padding-left:0.376px;margin-right:-0.376px">0</span></div>
<div class="td l c-vy" style="width:124px"><span style="letter-spacing:0.541px;padding-left:0.271px;margin-right:-0.271px">Stanislav Borák</span></div>
</div>
<div class="tr e">
<div class="td l c-p" style="width:26px"><svg class="ck" viewBox="0 0 512 512"><path d="M173.898 439.404l-166.4-166.4c-9.997-9.997-9.997-26.206 0-36.204l36.203-36.204c9.997-9.998 26.207-9.998 36.204 0L192 312.69 432.095 72.596c9.997-9.997 26.207-9.997 36.204 0l36.203 36.204c9.997 9.997 9.997 26.206 0 36.204l-294.4 294.401c-9.998 9.997-26.207 9.997-36.204-.001z"/></svg></div>
<div class="td l c-zak" style="width:238px"><span style="letter-spacing:0.672px;padding-left:0.336px;margin-right:-0.336px">opravy stavu-reklamacie</span></div>
<div class="td l c-cis" style="width:84px"><a><span style="letter-spacing:1.01px;padding-left:0.505px;margin-right:-0.505px">11100003</span></a></div>
<div class="td l c-typ" style="width:65px"><span style="letter-spacing:0.56px;padding-left:0.28px;margin-right:-0.28px">Faktura</span></div>
<div class="td l c-ne" style="width:32px"></div>
<div class="td l c-vn" style="width:33px"><svg class="ck" viewBox="0 0 512 512"><path d="M173.898 439.404l-166.4-166.4c-9.997-9.997-9.997-26.206 0-36.204l36.203-36.204c9.997-9.998 26.207-9.998 36.204 0L192 312.69 432.095 72.596c9.997-9.997 26.207-9.997 36.204 0l36.203 36.204c9.997 9.997 9.997 26.206 0 36.204l-294.4 294.401c-9.998 9.997-26.207 9.997-36.204-.001z"/></svg></div>
<div class="td l c-obj" style="width:123px"></div>
<div class="td l c-dat" style="width:94px"><span style="letter-spacing:0.803px;padding-left:0.402px;margin-right:-0.402px">29.09.2010</span></div>
<div class="td l c-uzp" style="width:115px"><span style="letter-spacing:0.803px;padding-left:0.402px;margin-right:-0.402px">29.09.2010</span></div>
<div class="td l c-spl" style="width:110px"><span style="letter-spacing:0.803px;padding-left:0.402px;margin-right:-0.402px">29.09.2010</span></div>
<div class="td r c-po" style="width:84px"><span style="letter-spacing:0.756px;padding-left:0.378px;margin-right:-0.378px">4143</span></div>
<div class="td l c-skl" style="width:172px"><span style="letter-spacing:-0.035px;padding-left:-0.018px;margin-right:0.018px">CENTRÁLNÍ SKLAD</span></div>
<div class="td r c-ks" style="width:47px"><span style="letter-spacing:0.752px;padding-left:0.376px;margin-right:-0.376px">19</span></div>
<div class="td r c-dpc" style="width:90px"><span style="letter-spacing:0.756px;padding-left:0.378px;margin-right:-0.378px">4351</span></div>
<div class="td r c-bez" style="width:94px"><span style="letter-spacing:0.79px;padding-left:0.395px;margin-right:-0.395px">1977.71</span></div>
<div class="td r c-sd" style="width:77px"><span style="letter-spacing:0.756px;padding-left:0.378px;margin-right:-0.378px">2175</span></div>
<div class="td r c-zap" style="width:89px"><span style="letter-spacing:0.756px;padding-left:0.378px;margin-right:-0.378px">2175</span></div>
<div class="td r c-dl" style="width:66px"><a><span style="letter-spacing:0.752px;padding-left:0.376px;margin-right:-0.376px">0</span></a></div>
<div class="td r c-ji" style="width:61px"><span style="letter-spacing:0.752px;padding-left:0.376px;margin-right:-0.376px">0</span></div>
<div class="td l c-vy" style="width:124px"><span style="letter-spacing:0.541px;padding-left:0.271px;margin-right:-0.271px">Stanislav Borák</span></div>
</div>
<div class="tr o">
<div class="td l c-p" style="width:26px"></div>
<div class="td l c-zak" style="width:238px"><span style="letter-spacing:0.672px;padding-left:0.336px;margin-right:-0.336px">opravy stavu-reklamacie</span></div>
<div class="td l c-cis" style="width:84px"><a><span style="letter-spacing:1.01px;padding-left:0.505px;margin-right:-0.505px">11100004</span></a></div>
<div class="td l c-typ" style="width:65px"><span style="letter-spacing:0.56px;padding-left:0.28px;margin-right:-0.28px">Faktura</span></div>
<div class="td l c-ne" style="width:32px"></div>
<div class="td l c-vn" style="width:33px"><svg class="ck" viewBox="0 0 512 512"><path d="M173.898 439.404l-166.4-166.4c-9.997-9.997-9.997-26.206 0-36.204l36.203-36.204c9.997-9.998 26.207-9.998 36.204 0L192 312.69 432.095 72.596c9.997-9.997 26.207-9.997 36.204 0l36.203 36.204c9.997 9.997 9.997 26.206 0 36.204l-294.4 294.401c-9.998 9.997-26.207 9.997-36.204-.001z"/></svg></div>
<div class="td l c-obj" style="width:123px"></div>
<div class="td l c-dat" style="width:94px"><span style="letter-spacing:0.803px;padding-left:0.402px;margin-right:-0.402px">29.09.2010</span></div>
<div class="td l c-uzp" style="width:115px"><span style="letter-spacing:0.803px;padding-left:0.402px;margin-right:-0.402px">29.09.2010</span></div>
<div class="td l c-spl" style="width:110px"><span style="letter-spacing:0.803px;padding-left:0.402px;margin-right:-0.402px">29.09.2010</span></div>
<div class="td r c-po" style="width:84px"><span style="letter-spacing:0.756px;padding-left:0.378px;margin-right:-0.378px">4143</span></div>
<div class="td l c-skl" style="width:172px"><span style="letter-spacing:-0.035px;padding-left:-0.018px;margin-right:0.018px">CENTRÁLNÍ SKLAD</span></div>
<div class="td r c-ks" style="width:47px"><span style="letter-spacing:0.752px;padding-left:0.376px;margin-right:-0.376px">39</span></div>
<div class="td r c-dpc" style="width:90px"><span style="letter-spacing:0.756px;padding-left:0.378px;margin-right:-0.378px">9321</span></div>
<div class="td r c-bez" style="width:94px"><span style="letter-spacing:0.79px;padding-left:0.395px;margin-right:-0.395px">8473.55</span></div>
<div class="td r c-sd" style="width:77px"><span style="letter-spacing:0.756px;padding-left:0.378px;margin-right:-0.378px">9321</span></div>
<div class="td r c-zap" style="width:89px"><span style="letter-spacing:0.756px;padding-left:0.378px;margin-right:-0.378px">9321</span></div>
<div class="td r c-dl" style="width:66px"><a><span style="letter-spacing:0.752px;padding-left:0.376px;margin-right:-0.376px">0</span></a></div>
<div class="td r c-ji" style="width:61px"><span style="letter-spacing:0.752px;padding-left:0.376px;margin-right:-0.376px">0</span></div>
<div class="td l c-vy" style="width:124px"><span style="letter-spacing:0.541px;padding-left:0.271px;margin-right:-0.271px">Stanislav Borák</span></div>
</div>
<div class="tr e">
<div class="td l c-p" style="width:26px"><svg class="ck" viewBox="0 0 512 512"><path d="M173.898 439.404l-166.4-166.4c-9.997-9.997-9.997-26.206 0-36.204l36.203-36.204c9.997-9.998 26.207-9.998 36.204 0L192 312.69 432.095 72.596c9.997-9.997 26.207-9.997 36.204 0l36.203 36.204c9.997 9.997 9.997 26.206 0 36.204l-294.4 294.401c-9.998 9.997-26.207 9.997-36.204-.001z"/></svg></div>
<div class="td l c-zak" style="width:238px"><span style="letter-spacing:0.672px;padding-left:0.336px;margin-right:-0.336px">opravy stavu-reklamacie</span></div>
<div class="td l c-cis" style="width:84px"><a><span style="letter-spacing:1.01px;padding-left:0.505px;margin-right:-0.505px">11100005</span></a></div>
<div class="td l c-typ" style="width:65px"><span style="letter-spacing:0.56px;padding-left:0.28px;margin-right:-0.28px">Faktura</span></div>
<div class="td l c-ne" style="width:32px"></div>
<div class="td l c-vn" style="width:33px"><svg class="ck" viewBox="0 0 512 512"><path d="M173.898 439.404l-166.4-166.4c-9.997-9.997-9.997-26.206 0-36.204l36.203-36.204c9.997-9.998 26.207-9.998 36.204 0L192 312.69 432.095 72.596c9.997-9.997 26.207-9.997 36.204 0l36.203 36.204c9.997 9.997 9.997 26.206 0 36.204l-294.4 294.401c-9.998 9.997-26.207 9.997-36.204-.001z"/></svg></div>
<div class="td l c-obj" style="width:123px"></div>
<div class="td l c-dat" style="width:94px"><span style="letter-spacing:0.803px;padding-left:0.402px;margin-right:-0.402px">31.10.2010</span></div>
<div class="td l c-uzp" style="width:115px"><span style="letter-spacing:0.803px;padding-left:0.402px;margin-right:-0.402px">31.10.2010</span></div>
<div class="td l c-spl" style="width:110px"><span style="letter-spacing:0.803px;padding-left:0.402px;margin-right:-0.402px">31.10.2010</span></div>
<div class="td r c-po" style="width:84px"><span style="letter-spacing:1.26px;padding-left:0.63px;margin-right:-0.63px">4111</span></div>
<div class="td l c-skl" style="width:172px"><span style="letter-spacing:-0.035px;padding-left:-0.018px;margin-right:0.018px">CENTRÁLNÍ SKLAD</span></div>
<div class="td r c-ks" style="width:47px"><span style="letter-spacing:0.752px;padding-left:0.376px;margin-right:-0.376px">77</span></div>
<div class="td r c-dpc" style="width:90px"><span style="letter-spacing:0.759px;padding-left:0.38px;margin-right:-0.38px">29473</span></div>
<div class="td r c-bez" style="width:94px"><span style="letter-spacing:0.796px;padding-left:0.398px;margin-right:-0.398px">749.25</span></div>
<div class="td r c-sd" style="width:77px"><span style="letter-spacing:0.758px;padding-left:0.379px;margin-right:-0.379px">824</span></div>
<div class="td r c-zap" style="width:89px"><span style="letter-spacing:0.758px;padding-left:0.379px;margin-right:-0.379px">824</span></div>
<div class="td r c-dl" style="width:66px"><a><span style="letter-spacing:0.752px;padding-left:0.376px;margin-right:-0.376px">0</span></a></div>
<div class="td r c-ji" style="width:61px"><span style="letter-spacing:0.752px;padding-left:0.376px;margin-right:-0.376px">0</span></div>
<div class="td l c-vy" style="width:124px"><span style="letter-spacing:0.541px;padding-left:0.271px;margin-right:-0.271px">Stanislav Borák</span></div>
</div>
<div class="tr o">
<div class="td l c-p" style="width:26px"><svg class="ck" viewBox="0 0 512 512"><path d="M173.898 439.404l-166.4-166.4c-9.997-9.997-9.997-26.206 0-36.204l36.203-36.204c9.997-9.998 26.207-9.998 36.204 0L192 312.69 432.095 72.596c9.997-9.997 26.207-9.997 36.204 0l36.203 36.204c9.997 9.997 9.997 26.206 0 36.204l-294.4 294.401c-9.998 9.997-26.207 9.997-36.204-.001z"/></svg></div>
<div class="td l c-zak" style="width:238px"><span style="letter-spacing:0.672px;padding-left:0.336px;margin-right:-0.336px">opravy stavu-reklamacie</span></div>
<div class="td l c-cis" style="width:84px"><a><span style="letter-spacing:1.01px;padding-left:0.505px;margin-right:-0.505px">11100006</span></a></div>
<div class="td l c-typ" style="width:65px"><span style="letter-spacing:0.56px;padding-left:0.28px;margin-right:-0.28px">Faktura</span></div>
<div class="td l c-ne" style="width:32px"></div>
<div class="td l c-vn" style="width:33px"><svg class="ck" viewBox="0 0 512 512"><path d="M173.898 439.404l-166.4-166.4c-9.997-9.997-9.997-26.206 0-36.204l36.203-36.204c9.997-9.998 26.207-9.998 36.204 0L192 312.69 432.095 72.596c9.997-9.997 26.207-9.997 36.204 0l36.203 36.204c9.997 9.997 9.997 26.206 0 36.204l-294.4 294.401c-9.998 9.997-26.207 9.997-36.204-.001z"/></svg></div>
<div class="td l c-obj" style="width:123px"></div>
<div class="td l c-dat" style="width:94px"><span style="letter-spacing:0.903px;padding-left:0.452px;margin-right:-0.452px">29.11.2010</span></div>
<div class="td l c-uzp" style="width:115px"><span style="letter-spacing:0.903px;padding-left:0.452px;margin-right:-0.452px">29.11.2010</span></div>
<div class="td l c-spl" style="width:110px"><span style="letter-spacing:0.903px;padding-left:0.452px;margin-right:-0.452px">29.11.2010</span></div>
<div class="td r c-po" style="width:84px"><span style="letter-spacing:0.756px;padding-left:0.378px;margin-right:-0.378px">4082</span></div>
<div class="td l c-skl" style="width:172px"><span style="letter-spacing:-0.035px;padding-left:-0.018px;margin-right:0.018px">CENTRÁLNÍ SKLAD</span></div>
<div class="td r c-ks" style="width:47px"><span style="letter-spacing:0.752px;padding-left:0.376px;margin-right:-0.376px">91</span></div>
<div class="td r c-dpc" style="width:90px"><span style="letter-spacing:0.759px;padding-left:0.38px;margin-right:-0.38px">31759</span></div>
<div class="td r c-bez" style="width:94px"><span style="letter-spacing:0.752px;padding-left:0.376px;margin-right:-0.376px">91</span></div>
<div class="td r c-sd" style="width:77px"><span style="letter-spacing:0.758px;padding-left:0.379px;margin-right:-0.379px">100</span></div>
<div class="td r c-zap" style="width:89px"><span style="letter-spacing:0.758px;padding-left:0.379px;margin-right:-0.379px">100</span></div>
<div class="td r c-dl" style="width:66px"><a><span style="letter-spacing:0.752px;padding-left:0.376px;margin-right:-0.376px">0</span></a></div>
<div class="td r c-ji" style="width:61px"><span style="letter-spacing:0.752px;padding-left:0.376px;margin-right:-0.376px">0</span></div>
<div class="td l c-vy" style="width:124px"><span style="letter-spacing:0.541px;padding-left:0.271px;margin-right:-0.271px">Stanislav Borák</span></div>
</div>
<div class="tr e">
<div class="td l c-p" style="width:26px"><svg class="ck" viewBox="0 0 512 512"><path d="M173.898 439.404l-166.4-166.4c-9.997-9.997-9.997-26.206 0-36.204l36.203-36.204c9.997-9.998 26.207-9.998 36.204 0L192 312.69 432.095 72.596c9.997-9.997 26.207-9.997 36.204 0l36.203 36.204c9.997 9.997 9.997 26.206 0 36.204l-294.4 294.401c-9.998 9.997-26.207 9.997-36.204-.001z"/></svg></div>
<div class="td l c-zak" style="width:238px"><span style="letter-spacing:0.672px;padding-left:0.336px;margin-right:-0.336px">opravy stavu-reklamacie</span></div>
<div class="td l c-cis" style="width:84px"><a><span style="letter-spacing:1.01px;padding-left:0.505px;margin-right:-0.505px">11100007</span></a></div>
<div class="td l c-typ" style="width:65px"><span style="letter-spacing:0.56px;padding-left:0.28px;margin-right:-0.28px">Faktura</span></div>
<div class="td l c-ne" style="width:32px"></div>
<div class="td l c-vn" style="width:33px"><svg class="ck" viewBox="0 0 512 512"><path d="M173.898 439.404l-166.4-166.4c-9.997-9.997-9.997-26.206 0-36.204l36.203-36.204c9.997-9.998 26.207-9.998 36.204 0L192 312.69 432.095 72.596c9.997-9.997 26.207-9.997 36.204 0l36.203 36.204c9.997 9.997 9.997 26.206 0 36.204l-294.4 294.401c-9.998 9.997-26.207 9.997-36.204-.001z"/></svg></div>
<div class="td l c-obj" style="width:123px"></div>
<div class="td l c-dat" style="width:94px"><span style="letter-spacing:0.903px;padding-left:0.452px;margin-right:-0.452px">29.11.2010</span></div>
<div class="td l c-uzp" style="width:115px"><span style="letter-spacing:0.903px;padding-left:0.452px;margin-right:-0.452px">29.11.2010</span></div>
<div class="td l c-spl" style="width:110px"><span style="letter-spacing:0.903px;padding-left:0.452px;margin-right:-0.452px">29.11.2010</span></div>
<div class="td r c-po" style="width:84px"><span style="letter-spacing:0.756px;padding-left:0.378px;margin-right:-0.378px">4082</span></div>
<div class="td l c-skl" style="width:172px"><span style="letter-spacing:-0.035px;padding-left:-0.018px;margin-right:0.018px">CENTRÁLNÍ SKLAD</span></div>
<div class="td r c-ks" style="width:47px"><span style="letter-spacing:0.756px;padding-left:0.378px;margin-right:-0.378px">1046</span></div>
<div class="td r c-dpc" style="width:90px"><span style="letter-spacing:0.927px;padding-left:0.464px;margin-right:-0.464px">411914</span></div>
<div class="td r c-bez" style="width:94px"><span style="letter-spacing:0.796px;padding-left:0.398px;margin-right:-0.398px">951.86</span></div>
<div class="td r c-sd" style="width:77px"><span style="letter-spacing:0.756px;padding-left:0.378px;margin-right:-0.378px">1047</span></div>
<div class="td r c-zap" style="width:89px"><span style="letter-spacing:0.756px;padding-left:0.378px;margin-right:-0.378px">1047</span></div>
<div class="td r c-dl" style="width:66px"><a><span style="letter-spacing:0.752px;padding-left:0.376px;margin-right:-0.376px">0</span></a></div>
<div class="td r c-ji" style="width:61px"><span style="letter-spacing:0.752px;padding-left:0.376px;margin-right:-0.376px">0</span></div>
<div class="td l c-vy" style="width:124px"><span style="letter-spacing:0.541px;padding-left:0.271px;margin-right:-0.271px">Stanislav Borák</span></div>
</div>
<div class="tr o">
<div class="td l c-p" style="width:26px"><svg class="ck" viewBox="0 0 512 512"><path d="M173.898 439.404l-166.4-166.4c-9.997-9.997-9.997-26.206 0-36.204l36.203-36.204c9.997-9.998 26.207-9.998 36.204 0L192 312.69 432.095 72.596c9.997-9.997 26.207-9.997 36.204 0l36.203 36.204c9.997 9.997 9.997 26.206 0 36.204l-294.4 294.401c-9.998 9.997-26.207 9.997-36.204-.001z"/></svg></div>
<div class="td l c-zak" style="width:238px"><span style="letter-spacing:0.672px;padding-left:0.336px;margin-right:-0.336px">opravy stavu-reklamacie</span></div>
<div class="td l c-cis" style="width:84px"><a><span style="letter-spacing:1.01px;padding-left:0.505px;margin-right:-0.505px">11100008</span></a></div>
<div class="td l c-typ" style="width:65px"><span style="letter-spacing:0.56px;padding-left:0.28px;margin-right:-0.28px">Faktura</span></div>
<div class="td l c-ne" style="width:32px"></div>
<div class="td l c-vn" style="width:33px"><svg class="ck" viewBox="0 0 512 512"><path d="M173.898 439.404l-166.4-166.4c-9.997-9.997-9.997-26.206 0-36.204l36.203-36.204c9.997-9.998 26.207-9.998 36.204 0L192 312.69 432.095 72.596c9.997-9.997 26.207-9.997 36.204 0l36.203 36.204c9.997 9.997 9.997 26.206 0 36.204l-294.4 294.401c-9.998 9.997-26.207 9.997-36.204-.001z"/></svg></div>
<div class="td l c-obj" style="width:123px"></div>
<div class="td l c-dat" style="width:94px"><span style="letter-spacing:0.903px;padding-left:0.452px;margin-right:-0.452px">29.11.2010</span></div>
<div class="td l c-uzp" style="width:115px"><span style="letter-spacing:0.903px;padding-left:0.452px;margin-right:-0.452px">29.11.2010</span></div>
<div class="td l c-spl" style="width:110px"><span style="letter-spacing:0.903px;padding-left:0.452px;margin-right:-0.452px">29.11.2010</span></div>
<div class="td r c-po" style="width:84px"><span style="letter-spacing:0.756px;padding-left:0.378px;margin-right:-0.378px">4082</span></div>
<div class="td l c-skl" style="width:172px"><span style="letter-spacing:-0.035px;padding-left:-0.018px;margin-right:0.018px">CENTRÁLNÍ SKLAD</span></div>
<div class="td r c-ks" style="width:47px"><span style="letter-spacing:0.752px;padding-left:0.376px;margin-right:-0.376px">12</span></div>
<div class="td r c-dpc" style="width:90px"><span style="letter-spacing:0.756px;padding-left:0.378px;margin-right:-0.378px">1200</span></div>
<div class="td r c-bez" style="width:94px"><span style="letter-spacing:0.79px;padding-left:0.395px;margin-right:-0.395px">1090.91</span></div>
<div class="td r c-sd" style="width:77px"><span style="letter-spacing:0.756px;padding-left:0.378px;margin-right:-0.378px">1200</span></div>
<div class="td r c-zap" style="width:89px"><span style="letter-spacing:0.756px;padding-left:0.378px;margin-right:-0.378px">1200</span></div>
<div class="td r c-dl" style="width:66px"><a><span style="letter-spacing:0.752px;padding-left:0.376px;margin-right:-0.376px">0</span></a></div>
<div class="td r c-ji" style="width:61px"><span style="letter-spacing:0.752px;padding-left:0.376px;margin-right:-0.376px">0</span></div>
<div class="td l c-vy" style="width:124px"><span style="letter-spacing:0.541px;padding-left:0.271px;margin-right:-0.271px">Stanislav Borák</span></div>
</div>
</div>
<div class="sb" style="left:1903px;top:76px;height:808px"><div class="up dis"><svg viewBox="0 0 17 17" class="arr"><path d="M4.500 10.500L8.500 6.500L12.500 10.500z"/></svg></div><div class="thumb" style="top:16px;height:682px"></div><div class="dn"><svg viewBox="0 0 17 17" class="arr"><path d="M4.500 6.500L8.500 10.500L12.500 6.500z"/></svg></div></div><div class="sb" style="left:1886px;top:186px;height:698px"><div class="up dis"><svg viewBox="0 0 17 17" class="arr"><path d="M4.500 10.500L8.500 6.500L12.500 10.500z"/></svg></div><div class="thumb" style="top:16px;height:502px"></div></div>
<div id="fbar"></div><div id="foot"><span style="display:inline-block;transform:scaleY(0.9);font-size:14.44px;letter-spacing:0.68px">Počet titulů: 815 | SHERPA v 5.0 | Copyright © 2001-2021 <b>BetaZ.cz s.r.o.</b>, tel. +420 602 543 170 email <b>jana.betaz@seznam.cz</b></span></div>
</body></html>
